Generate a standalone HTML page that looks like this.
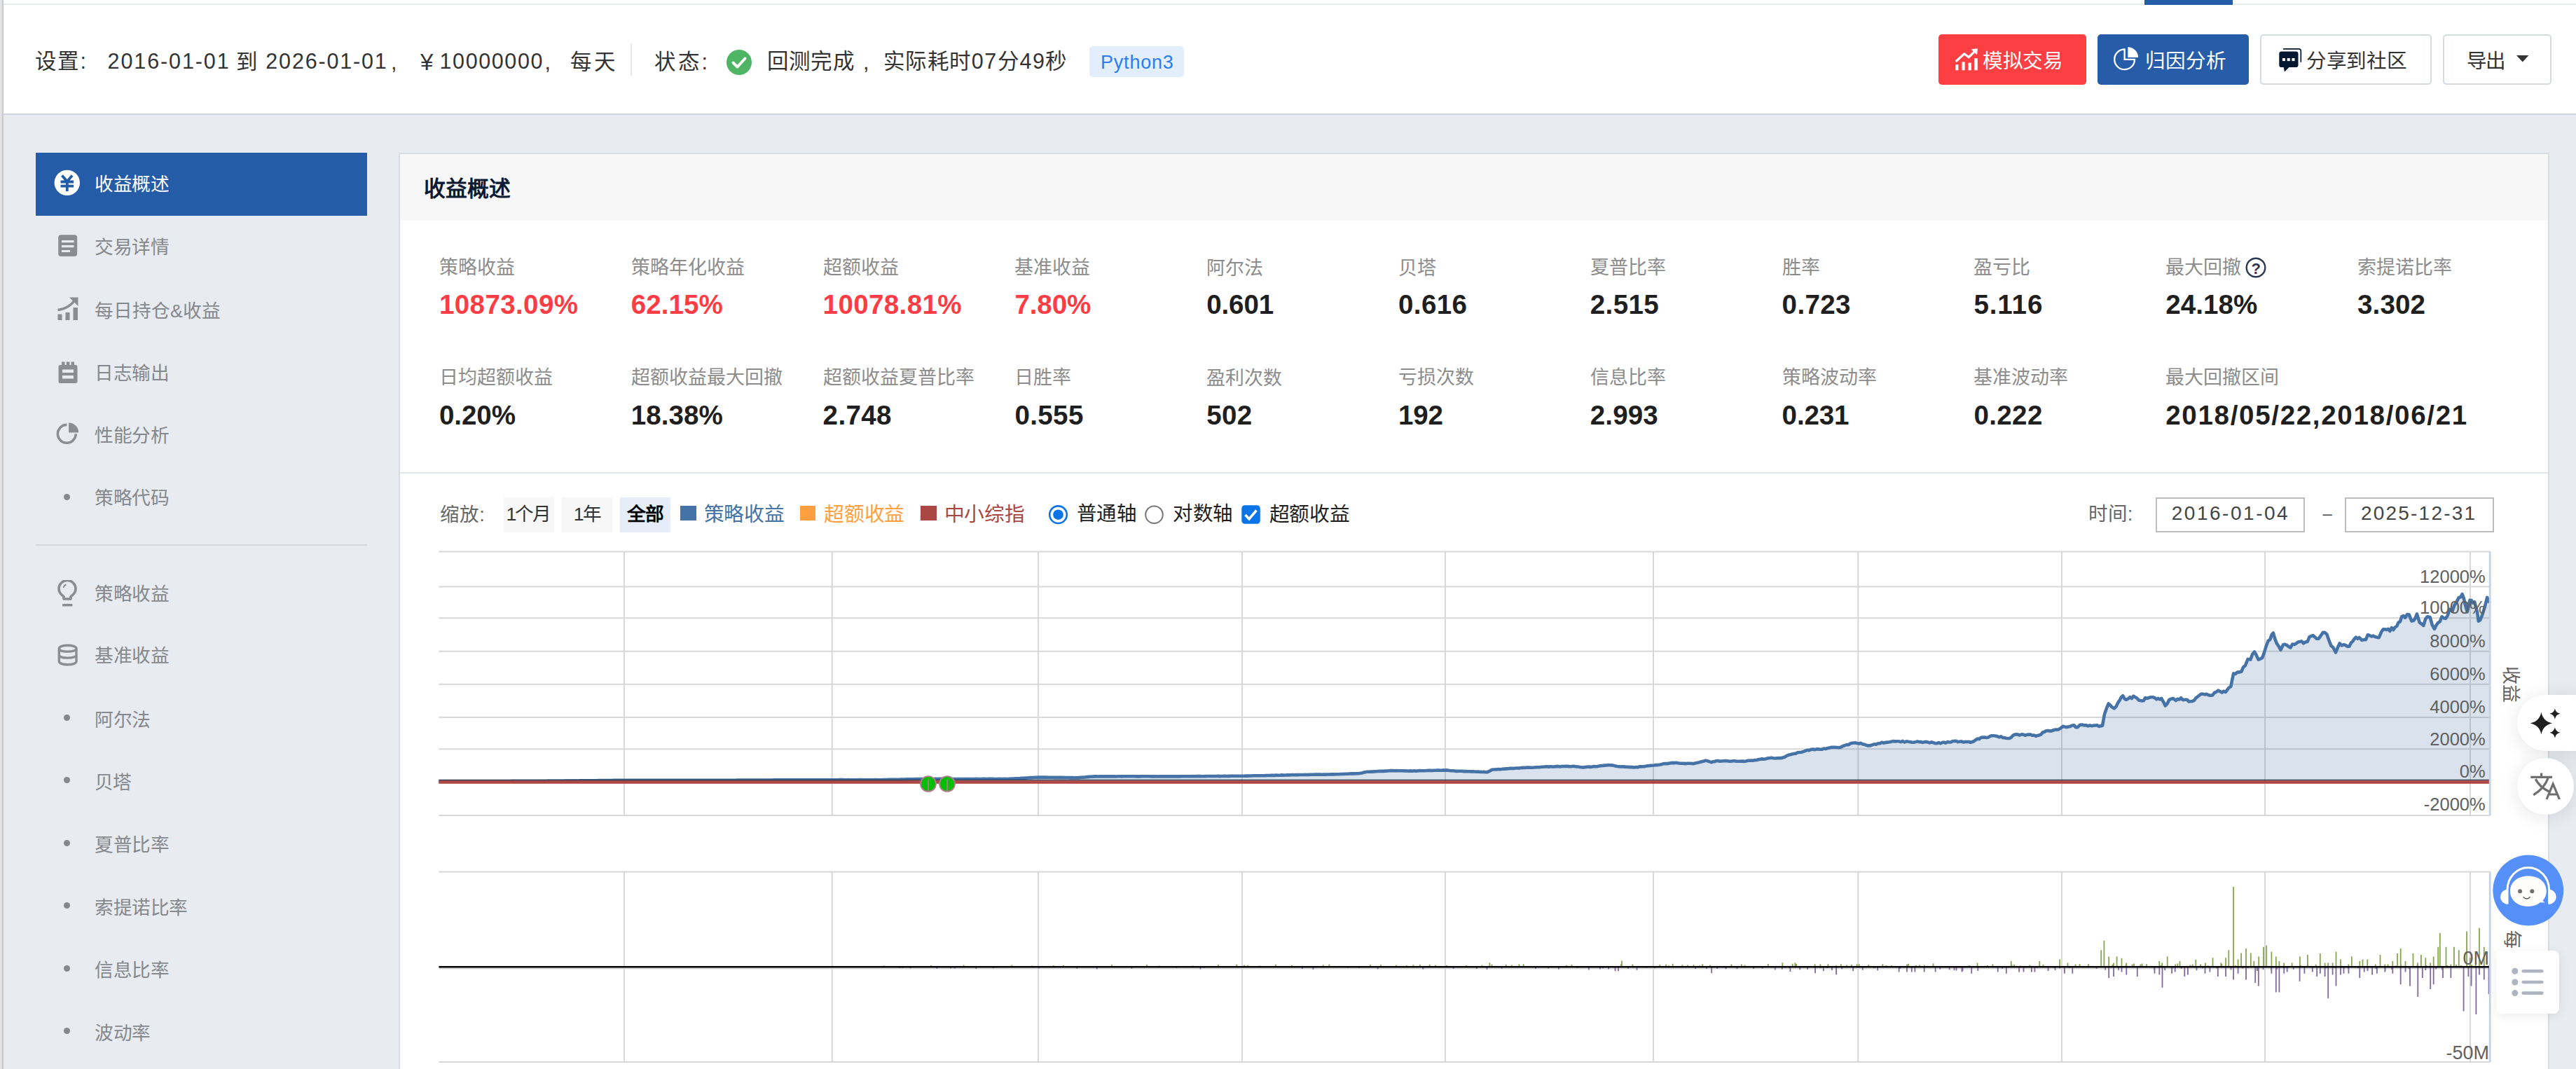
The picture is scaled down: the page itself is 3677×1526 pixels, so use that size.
<!DOCTYPE html>
<html lang="zh-CN"><head><meta charset="utf-8"><title>回测详情</title>
<style>
html,body{margin:0;padding:0}
body{width:3677px;height:1526px;overflow:hidden;background:#e8ebf0;font-family:"Liberation Sans",sans-serif;position:relative;color:#333}
div,span,svg{position:absolute;box-sizing:border-box}
.t{white-space:nowrap;line-height:1}
.b{font-weight:bold}
</style></head><body>
<div style="left:0.0px;top:0.0px;width:3677.0px;height:163.5px;background:#fff;"></div>
<div style="left:0.0px;top:4.9px;width:3677.0px;height:1.9px;background:#e6ebf0;"></div>
<div style="left:3061.0px;top:0.0px;width:126.0px;height:6.8px;background:#245ca8;"></div>
<div style="left:0.0px;top:161.7px;width:3677.0px;height:1.9px;background:#d0d5dd;"></div>
<div style="left:0.0px;top:0.0px;width:3.4px;height:1526.0px;background:#e3e3e3;"></div>
<div style="left:3.4px;top:0.0px;width:1.9px;height:1526.0px;background:#c9c9c9;"></div>
<div id="t1" class="t" style="top:71.8px;font-size:30.5px;color:#333;left:50.0px;letter-spacing:2.26px;">设置:</div>
<div id="t2" class="t" style="top:71.8px;font-size:30.5px;color:#333;left:153.6px;letter-spacing:1.89px;">2016-01-01</div>
<div id="t3" class="t" style="top:72.8px;font-size:30.5px;color:#333;left:337.0px;">到</div>
<div id="t4" class="t" style="top:71.8px;font-size:30.5px;color:#333;left:379.3px;letter-spacing:1.83px;">2026-01-01</div>
<div id="t5" class="t" style="top:72.8px;font-size:30.5px;color:#333;left:558.0px;">,</div>
<div id="t6" class="t" style="top:71.5px;font-size:33.0px;color:#333;left:600.0px;">¥</div>
<div id="t7" class="t" style="top:71.8px;font-size:30.5px;color:#333;left:627.5px;letter-spacing:1.61px;">10000000</div>
<div id="t8" class="t" style="top:72.8px;font-size:30.5px;color:#333;left:777.6px;">,</div>
<div id="t9" class="t" style="top:72.8px;font-size:30.5px;color:#333;left:814.0px;letter-spacing:3.50px;">每天</div>
<div style="left:900.3px;top:63.0px;width:1.9px;height:44.6px;background:#e4e8ee;"></div>
<div id="t10" class="t" style="top:72.8px;font-size:30.5px;color:#333;left:934.0px;letter-spacing:3.76px;">状态:</div>
<svg style="left:1037px;top:70.7px" width="36" height="36" viewBox="0 0 36 36"><circle cx="18" cy="18" r="18" fill="#4db564"/><path d="M9.5 18.5 L15.5 24.5 L26.5 12.5" fill="none" stroke="#fff" stroke-width="4" stroke-linecap="round" stroke-linejoin="round"/></svg>
<div id="t11" class="t" style="top:71.8px;font-size:30.5px;color:#333;left:1094.8px;letter-spacing:1.33px;">回测完成</div>
<div id="t12" class="t" style="top:72.8px;font-size:30.5px;color:#333;left:1232.0px;">,</div>
<div id="t13" class="t" style="top:71.8px;font-size:30.5px;color:#333;left:1260.5px;letter-spacing:1.57px;">实际耗时07分49秒</div>
<div style="left:1555.3px;top:66.0px;width:134.5px;height:44.4px;background:#e3eefd;border-radius:5px;"></div>
<div id="t14" class="t" style="top:76.1px;font-size:27.0px;color:#2d7cf0;left:1571.0px;letter-spacing:0.79px;">Python3</div>
<div style="left:2767.0px;top:49.1px;width:211.0px;height:71.7px;background:#fd3e42;border-radius:5px;"></div>
<div style="left:2994.0px;top:49.1px;width:216.0px;height:71.7px;background:#265ca8;border-radius:5px;"></div>
<div style="left:3226.2px;top:49.1px;width:245.0px;height:71.7px;background:#fff;border:2px solid #d5dbe0;border-radius:5px;"></div>
<div style="left:3487.0px;top:49.1px;width:155.0px;height:71.7px;background:#fff;border:2px solid #d5dbe0;border-radius:5px;"></div>
<div id="t15" class="t" style="top:73.1px;font-size:28.6px;color:#fff;left:2830.0px;letter-spacing:-0.47px;">模拟交易</div>
<div id="t16" class="t" style="top:73.1px;font-size:28.6px;color:#fff;left:3062.0px;">归因分析</div>
<div id="t17" class="t" style="top:72.5px;font-size:28.6px;color:#333;left:3292.0px;letter-spacing:-0.30px;">分享到社区</div>
<div id="t18" class="t" style="top:73.1px;font-size:28.6px;color:#333;left:3521.0px;letter-spacing:-2.00px;">导出</div>
<svg style="left:3592px;top:79px" width="18" height="10" viewBox="0 0 18 10"><path d="M0 0 H17.5 L8.75 9.5 Z" fill="#333"/></svg>
<div style="left:51.0px;top:217.6px;width:473.0px;height:90.0px;background:#255ca8;"></div>
<div id="t19" class="t" style="top:250.3px;font-size:26.7px;color:#fff;left:135.0px;letter-spacing:-0.40px;">收益概述</div>
<div id="t20" class="t" style="top:340.2px;font-size:26.7px;color:#85888c;left:135.0px;letter-spacing:-0.40px;">交易详情</div>
<div id="t21" class="t" style="top:431.2px;font-size:26.7px;color:#85888c;left:135.0px;">每日持仓&amp;收益</div>
<div id="t22" class="t" style="top:519.9px;font-size:26.7px;color:#85888c;left:135.0px;letter-spacing:-0.40px;">日志输出</div>
<div id="t23" class="t" style="top:609.2px;font-size:26.7px;color:#85888c;left:135.0px;letter-spacing:-0.40px;">性能分析</div>
<div id="t24" class="t" style="top:697.6px;font-size:26.7px;color:#85888c;left:135.0px;letter-spacing:-0.40px;">策略代码</div>
<div style="left:51.0px;top:777.2px;width:473.0px;height:1.9px;background:#d3d7dc;"></div>
<div id="t25" class="t" style="top:834.6px;font-size:26.7px;color:#85888c;left:135.0px;letter-spacing:-0.40px;">策略收益</div>
<div id="t26" class="t" style="top:922.6px;font-size:26.7px;color:#85888c;left:135.0px;letter-spacing:-0.40px;">基准收益</div>
<div id="t27" class="t" style="top:1015.0px;font-size:26.7px;color:#85888c;left:135.0px;letter-spacing:-0.45px;">阿尔法</div>
<div id="t28" class="t" style="top:1103.7px;font-size:26.7px;color:#85888c;left:135.0px;letter-spacing:-0.61px;">贝塔</div>
<div id="t29" class="t" style="top:1193.2px;font-size:26.7px;color:#85888c;left:135.0px;letter-spacing:-0.40px;">夏普比率</div>
<div id="t30" class="t" style="top:1282.7px;font-size:26.7px;color:#85888c;left:135.0px;letter-spacing:-0.38px;">索提诺比率</div>
<div id="t31" class="t" style="top:1371.7px;font-size:26.7px;color:#85888c;left:135.0px;letter-spacing:-0.40px;">信息比率</div>
<div id="t32" class="t" style="top:1461.7px;font-size:26.7px;color:#85888c;left:135.0px;letter-spacing:-0.45px;">波动率</div>
<div style="left:91.1px;top:704.5px;width:9.4px;height:9.4px;background:#85888c;border-radius:50%;"></div>
<div style="left:91.1px;top:1019.8px;width:9.4px;height:9.4px;background:#85888c;border-radius:50%;"></div>
<div style="left:91.1px;top:1109.1px;width:9.4px;height:9.4px;background:#85888c;border-radius:50%;"></div>
<div style="left:91.1px;top:1198.8px;width:9.4px;height:9.4px;background:#85888c;border-radius:50%;"></div>
<div style="left:91.1px;top:1288.1px;width:9.4px;height:9.4px;background:#85888c;border-radius:50%;"></div>
<div style="left:91.1px;top:1377.6px;width:9.4px;height:9.4px;background:#85888c;border-radius:50%;"></div>
<div style="left:91.1px;top:1467.1px;width:9.4px;height:9.4px;background:#85888c;border-radius:50%;"></div>
<svg style="left:77px;top:242px" width="38" height="38" viewBox="0 0 38 38"><circle cx="18.800" cy="18.900" r="18.200" fill="#fff"/><path d="M11.5 8.5 L18.800 17 L26.100 8.500 M9.500 17.500 H28.100 M9.500 23.700 H28.100 M18.800 17 V31" fill="none" stroke="#255ca8" stroke-width="3.800"/></svg>
<svg style="left:82.500px;top:335px" width="28" height="32" viewBox="0 0 28 32"><rect x="0.200" y="0.300" width="27" height="30.800" rx="4" fill="#8a8d91"/><g fill="#e8ebf0"><rect x="5" y="8" width="17.500" height="3.200"/><rect x="5" y="15" width="17.500" height="3.200"/><rect x="5" y="22" width="12" height="3"/></g></svg>
<svg style="left:82px;top:423px" width="31" height="36" viewBox="0 0 31 36"><g fill="#8a8d91"><rect x="0.500" y="25.500" width="6" height="8.500"/><rect x="11.500" y="23" width="6" height="11"/><rect x="22.500" y="16" width="6.500" height="18"/></g><path d="M0.500 19.500 C10 18.500 19 14 26 4" fill="none" stroke="#8a8d91" stroke-width="3.400"/><path d="M17 1.500 H29.500 V14 Z" fill="#8a8d91"/></svg>
<svg style="left:82.500px;top:516px" width="28" height="32" viewBox="0 0 28 32"><path d="M3 5 H25 a2.500 2.500 0 0 1 2.500 2.500 V28.500 a2.500 2.500 0 0 1 -2.500 2.500 H3 a2.500 2.500 0 0 1 -2.500 -2.500 V7.500 a2.500 2.500 0 0 1 2.500 -2.500 Z" fill="#8a8d91"/><g fill="#8a8d91"><rect x="5" y="0.500" width="4.500" height="8"/><rect x="11.800" y="0.500" width="4.500" height="8"/><rect x="18.500" y="0.500" width="4.500" height="8"/></g><g fill="#e8ebf0"><rect x="6" y="11.500" width="16" height="4.500"/><rect x="6" y="20" width="16" height="4.500"/></g></svg>
<svg style="left:80px;top:603px" width="34" height="34" viewBox="0 0 34 34"><path d="M15.3 3.4 A12.9 12.9 0 1 0 28.2 16.3" fill="none" stroke="#8a8d91" stroke-width="3.6"/><path d="M18.1 14.5 V0.5 A14 14 0 0 1 32.1 14.5 Z" fill="#8a8d91"/></svg>
<svg style="left:82px;top:827.5px" width="29" height="40" viewBox="0 0 29 40"><path d="M9 27 V23.500 C4.500 20.500 2 17.500 2 12.500 A12 12 0 0 1 26 12.500 C26 17.500 23.500 20.500 19 23.500 V27 Z" fill="none" stroke="#8a8d91" stroke-width="3.6" stroke-linejoin="round"/><path d="M8.500 11 A5.500 5.500 0 0 1 12.500 6.500" fill="none" stroke="#8a8d91" stroke-width="2"/><rect x="7" y="34" width="14.500" height="3.600" rx="1" fill="#8a8d91"/></svg>
<svg style="left:82px;top:918.500px" width="30" height="32" viewBox="0 0 30 32"><path d="M2.300 7 C2.300 0.700 27 0.700 27 7 V25 C27 31.300 2.300 31.300 2.300 25 Z M2.300 7 C2.300 12.500 27 12.500 27 7 M2.300 16 C2.300 21.500 27 21.500 27 16" fill="none" stroke="#8a8d91" stroke-width="3.400"/></svg>
<div style="left:569.0px;top:217.6px;width:3070.0px;height:1320.0px;background:#fff;border:2px solid #d8dde3;"></div>
<div style="left:571.0px;top:219.6px;width:3066.0px;height:95.4px;background:#f7f7f8;"></div>
<div id="t33" class="t b" style="top:255.1px;font-size:30.8px;color:#0d1a33;left:605.0px;">收益概述</div>
<div id="t34" class="t" style="top:369.4px;font-size:27.0px;color:#8c8c8c;left:627.0px;">策略收益</div>
<div id="t35" class="t b" style="top:415.9px;font-size:38.6px;color:#fc3d46;left:627.0px;letter-spacing:0.35px;">10873.09%</div>
<div id="t36" class="t" style="top:369.4px;font-size:27.0px;color:#8c8c8c;left:900.8px;">策略年化收益</div>
<div id="t37" class="t b" style="top:415.9px;font-size:38.6px;color:#fc3d46;left:900.8px;letter-spacing:0.03px;">62.15%</div>
<div id="t38" class="t" style="top:368.9px;font-size:27.0px;color:#8c8c8c;left:1174.6px;">超额收益</div>
<div id="t39" class="t b" style="top:415.9px;font-size:38.6px;color:#fc3d46;left:1174.6px;letter-spacing:0.35px;">10078.81%</div>
<div id="t40" class="t" style="top:369.4px;font-size:27.0px;color:#8c8c8c;left:1448.4px;">基准收益</div>
<div id="t41" class="t b" style="top:415.9px;font-size:38.6px;color:#fc3d46;left:1448.4px;letter-spacing:-0.10px;">7.80%</div>
<div id="t42" class="t" style="top:369.9px;font-size:27.0px;color:#8c8c8c;left:1722.2px;">阿尔法</div>
<div id="t43" class="t b" style="top:415.9px;font-size:38.6px;color:#1f1f1f;left:1722.2px;letter-spacing:-0.14px;">0.601</div>
<div id="t44" class="t" style="top:369.9px;font-size:27.0px;color:#8c8c8c;left:1996.0px;">贝塔</div>
<div id="t45" class="t b" style="top:415.9px;font-size:38.6px;color:#1f1f1f;left:1996.0px;letter-spacing:0.36px;">0.616</div>
<div id="t46" class="t" style="top:369.4px;font-size:27.0px;color:#8c8c8c;left:2269.8px;">夏普比率</div>
<div id="t47" class="t b" style="top:415.9px;font-size:38.6px;color:#1f1f1f;left:2269.8px;letter-spacing:0.36px;">2.515</div>
<div id="t48" class="t" style="top:369.4px;font-size:27.0px;color:#8c8c8c;left:2543.6px;">胜率</div>
<div id="t49" class="t b" style="top:415.9px;font-size:38.6px;color:#1f1f1f;left:2543.6px;letter-spacing:0.36px;">0.723</div>
<div id="t50" class="t" style="top:369.4px;font-size:27.0px;color:#8c8c8c;left:2817.4px;">盈亏比</div>
<div id="t51" class="t b" style="top:415.9px;font-size:38.6px;color:#1f1f1f;left:2817.4px;letter-spacing:0.89px;">5.116</div>
<div id="t52" class="t" style="top:369.4px;font-size:27.0px;color:#8c8c8c;left:3091.2px;">最大回撤</div>
<div id="t53" class="t b" style="top:415.9px;font-size:38.6px;color:#1f1f1f;left:3091.2px;letter-spacing:0.03px;">24.18%</div>
<div id="t54" class="t" style="top:369.4px;font-size:27.0px;color:#8c8c8c;left:3365.0px;">索提诺比率</div>
<div id="t55" class="t b" style="top:415.9px;font-size:38.6px;color:#1f1f1f;left:3365.0px;letter-spacing:0.11px;">3.302</div>
<div id="t56" class="t" style="top:525.9px;font-size:27.0px;color:#8c8c8c;left:627.0px;">日均超额收益</div>
<div id="t57" class="t b" style="top:574.1px;font-size:38.6px;color:#1f1f1f;left:627.0px;letter-spacing:-0.10px;">0.20%</div>
<div id="t58" class="t" style="top:526.4px;font-size:27.0px;color:#8c8c8c;left:900.8px;">超额收益最大回撤</div>
<div id="t59" class="t b" style="top:574.1px;font-size:38.6px;color:#1f1f1f;left:900.8px;letter-spacing:0.03px;">18.38%</div>
<div id="t60" class="t" style="top:526.4px;font-size:27.0px;color:#8c8c8c;left:1174.6px;">超额收益夏普比率</div>
<div id="t61" class="t b" style="top:574.1px;font-size:38.6px;color:#1f1f1f;left:1174.6px;letter-spacing:0.36px;">2.748</div>
<div id="t62" class="t" style="top:526.4px;font-size:27.0px;color:#8c8c8c;left:1448.4px;">日胜率</div>
<div id="t63" class="t b" style="top:574.1px;font-size:38.6px;color:#1f1f1f;left:1448.4px;letter-spacing:0.36px;">0.555</div>
<div id="t64" class="t" style="top:526.9px;font-size:27.0px;color:#8c8c8c;left:1722.2px;">盈利次数</div>
<div id="t65" class="t b" style="top:574.1px;font-size:38.6px;color:#1f1f1f;left:1722.2px;letter-spacing:0.32px;">502</div>
<div id="t66" class="t" style="top:526.4px;font-size:27.0px;color:#8c8c8c;left:1996.0px;">亏损次数</div>
<div id="t67" class="t b" style="top:574.1px;font-size:38.6px;color:#1f1f1f;left:1996.0px;letter-spacing:-0.18px;">192</div>
<div id="t68" class="t" style="top:526.4px;font-size:27.0px;color:#8c8c8c;left:2269.8px;">信息比率</div>
<div id="t69" class="t b" style="top:574.1px;font-size:38.6px;color:#1f1f1f;left:2269.8px;letter-spacing:0.11px;">2.993</div>
<div id="t70" class="t" style="top:526.4px;font-size:27.0px;color:#8c8c8c;left:2543.6px;">策略波动率</div>
<div id="t71" class="t b" style="top:574.1px;font-size:38.6px;color:#1f1f1f;left:2543.6px;letter-spacing:-0.14px;">0.231</div>
<div id="t72" class="t" style="top:526.4px;font-size:27.0px;color:#8c8c8c;left:2817.4px;">基准波动率</div>
<div id="t73" class="t b" style="top:574.1px;font-size:38.6px;color:#1f1f1f;left:2817.4px;letter-spacing:0.36px;">0.222</div>
<div id="t74" class="t" style="top:526.4px;font-size:27.0px;color:#8c8c8c;left:3091.2px;">最大回撤区间</div>
<div id="t75" class="t b" style="top:574.1px;font-size:38.6px;color:#1f1f1f;left:3091.2px;letter-spacing:1.66px;">2018/05/22,2018/06/21</div>
<svg style="left:3204px;top:366px" width="32" height="32" viewBox="0 0 32 32"><circle cx="16" cy="16" r="13.300" fill="#fff" stroke="#2b3650" stroke-width="2.400"/></svg>
<div id="t76" class="t b" style="top:372.5px;font-size:22.0px;color:#2b3650;left:3213.5px;">?</div>
<div style="left:571.0px;top:673.8px;width:3066.0px;height:1.9px;background:#e3e8ef;"></div>
<div id="t77" class="t" style="top:720.8px;font-size:27.5px;color:#666;left:628.0px;letter-spacing:1.18px;">缩放:</div>
<div style="left:718.8px;top:710.4px;width:71.9px;height:49.4px;background:#f7f7f7;"></div>
<div style="left:802.2px;top:710.4px;width:71.7px;height:49.4px;background:#f7f7f7;"></div>
<div style="left:885.3px;top:710.4px;width:72.0px;height:49.4px;background:#e6edf8;"></div>
<div id="t78" class="t" style="top:721.1px;font-size:26.7px;color:#333;left:722.5px;letter-spacing:-2.18px;">1个月</div>
<div id="t79" class="t" style="top:720.6px;font-size:26.7px;color:#333;left:818.7px;letter-spacing:-1.34px;">1年</div>
<div id="t80" class="t b" style="top:720.6px;font-size:26.7px;color:#000;left:894.5px;letter-spacing:-0.61px;">全部</div>
<div style="left:971.0px;top:721.5px;width:22.6px;height:21.5px;background:#4572a7;"></div>
<div id="t81" class="t" style="top:719.6px;font-size:28.8px;color:#4572a7;left:1004.6px;letter-spacing:-0.27px;">策略收益</div>
<div style="left:1141.5px;top:721.5px;width:22.6px;height:21.5px;background:#ff9f3f;"></div>
<div id="t82" class="t" style="top:719.6px;font-size:28.8px;color:#ff9f3f;left:1175.8px;letter-spacing:-0.10px;">超额收益</div>
<div style="left:1314.0px;top:721.5px;width:22.6px;height:21.5px;background:#aa4643;"></div>
<div id="t83" class="t" style="top:719.6px;font-size:28.8px;color:#aa4643;left:1347.5px;letter-spacing:-0.10px;">中小综指</div>
<svg style="left:1496px;top:720px" width="30" height="30" viewBox="0 0 30 30"><circle cx="14.500" cy="14.700" r="12.300" fill="#fff" stroke="#0b74e8" stroke-width="2.600"/><circle cx="14.500" cy="14.700" r="7.300" fill="#0b74e8"/></svg>
<div id="t84" class="t" style="top:718.5px;font-size:28.5px;color:#1f1f1f;left:1537.0px;letter-spacing:-0.75px;">普通轴</div>
<svg style="left:1633px;top:720px" width="30" height="30" viewBox="0 0 30 30"><circle cx="14.500" cy="14.700" r="12.300" fill="#fff" stroke="#767676" stroke-width="2"/></svg>
<div id="t85" class="t" style="top:718.5px;font-size:28.5px;color:#1f1f1f;left:1674.0px;letter-spacing:-0.50px;">对数轴</div>
<svg style="left:1772px;top:721px" width="28" height="28" viewBox="0 0 28 28"><rect x="0.300" y="0.300" width="26.500" height="26.500" rx="4.500" fill="#0b74e8"/><path d="M5.500 14 L11 19.800 L21.500 7.500" fill="none" stroke="#fff" stroke-width="3.600"/></svg>
<div id="t86" class="t" style="top:720.2px;font-size:28.8px;color:#1f1f1f;left:1811.6px;letter-spacing:-0.27px;">超额收益</div>
<div id="t87" class="t" style="top:719.8px;font-size:27.5px;color:#666;left:2980.8px;letter-spacing:0.93px;">时间:</div>
<div style="left:3077.4px;top:710.4px;width:213.0px;height:49.2px;background:#fff;border:2px solid #bcbcbc;"></div>
<div style="left:3347.3px;top:710.4px;width:213.0px;height:49.2px;background:#fff;border:2px solid #bcbcbc;"></div>
<div id="t88" class="t" style="top:719.0px;font-size:28.0px;color:#444;left:3099.7px;letter-spacing:2.53px;">2016-01-04</div>
<div id="t89" class="t" style="top:721.0px;font-size:24.0px;color:#444;left:3315.5px;">–</div>
<div id="t90" class="t" style="top:719.0px;font-size:28.0px;color:#444;left:3370.0px;letter-spacing:2.20px;">2025-12-31</div>
<svg style="left:0;top:0" width="3677" height="1526" viewBox="0 0 3677 1526"><path d="M626.4 787.5 H3554.5M626.4 837.6 H3554.5M626.4 882.2 H3554.5M626.4 929.7 H3554.5M626.4 976.8 H3554.5M626.4 1024.0 H3554.5M626.4 1069.2 H3554.5M626.4 1163.9 H3554.5M891.0 787.5 V1163.9M1187.7 787.5 V1163.9M1482.0 787.5 V1163.9M1773.0 787.5 V1163.9M2063.0 787.5 V1163.9M2360.0 787.5 V1163.9M2652.3 787.5 V1163.9M2943.0 787.5 V1163.9M3233.0 787.5 V1163.9M3526.0 787.5 V1163.9" stroke="#d8d8d8" stroke-width="2" fill="none"/><path d="M626.3 1115.5 L628.9 1115.5 L631.5 1115.5 L634.1 1115.5 L636.7 1115.5 L639.3 1115.5 L641.9 1115.5 L644.5 1115.5 L647.1 1115.5 L649.7 1115.5 L652.2 1115.5 L654.8 1115.5 L657.4 1115.4 L660.0 1115.4 L662.6 1115.4 L665.2 1115.4 L667.8 1115.4 L670.4 1115.4 L673.0 1115.3 L675.6 1115.4 L678.2 1115.4 L680.8 1115.3 L683.4 1115.3 L686.0 1115.3 L688.6 1115.3 L691.2 1115.3 L693.7 1115.3 L696.3 1115.3 L698.9 1115.3 L701.5 1115.3 L704.1 1115.2 L706.7 1115.2 L709.3 1115.2 L711.9 1115.2 L714.5 1115.2 L717.1 1115.2 L719.7 1115.2 L722.3 1115.2 L724.9 1115.2 L727.5 1115.2 L730.1 1115.1 L732.7 1115.1 L735.3 1115.1 L737.8 1115.1 L740.4 1115.1 L743.0 1115.1 L745.6 1115.1 L748.2 1115.1 L750.8 1115.0 L753.4 1115.0 L756.0 1115.0 L758.6 1115.0 L761.2 1115.0 L763.8 1115.0 L766.4 1115.0 L769.0 1115.0 L771.6 1115.0 L774.2 1115.0 L776.8 1115.0 L779.4 1115.0 L782.0 1114.9 L784.6 1114.9 L787.2 1114.9 L789.8 1114.8 L792.4 1114.8 L795.0 1114.8 L797.5 1114.8 L800.1 1114.7 L802.7 1114.7 L805.3 1114.7 L807.9 1114.6 L810.5 1114.6 L813.1 1114.6 L815.7 1114.6 L818.3 1114.5 L820.9 1114.5 L823.5 1114.5 L826.1 1114.5 L828.7 1114.4 L831.3 1114.4 L833.9 1114.4 L836.5 1114.3 L839.1 1114.3 L841.7 1114.3 L844.3 1114.3 L846.9 1114.2 L849.5 1114.2 L852.1 1114.2 L854.7 1114.1 L857.3 1114.1 L859.9 1114.1 L862.5 1114.1 L865.1 1114.0 L867.7 1114.0 L870.3 1114.0 L872.9 1114.0 L875.5 1113.9 L878.1 1113.9 L880.7 1113.9 L883.3 1113.8 L885.9 1113.8 L888.5 1113.8 L891.1 1113.8 L893.7 1113.8 L896.3 1113.8 L898.9 1113.8 L901.5 1113.8 L904.1 1113.8 L906.7 1113.8 L909.3 1113.8 L911.9 1113.8 L914.5 1113.8 L917.1 1113.8 L919.7 1113.8 L922.3 1113.8 L924.9 1113.8 L927.5 1113.8 L930.1 1113.8 L932.7 1113.8 L935.3 1113.8 L937.9 1113.8 L940.5 1113.8 L943.1 1113.8 L945.7 1113.8 L948.3 1113.8 L950.9 1113.8 L953.5 1113.8 L956.1 1113.8 L958.7 1113.8 L961.3 1113.8 L963.9 1113.8 L966.5 1113.8 L969.1 1113.8 L971.7 1113.8 L974.3 1113.8 L976.9 1113.8 L979.5 1113.8 L982.1 1113.8 L984.7 1113.8 L987.3 1113.8 L989.9 1113.8 L992.5 1113.8 L995.1 1113.8 L997.7 1113.8 L1000.3 1113.8 L1002.9 1113.8 L1005.5 1113.8 L1008.1 1113.8 L1010.7 1113.8 L1013.3 1113.8 L1015.9 1113.8 L1018.5 1113.8 L1021.1 1113.7 L1023.7 1113.7 L1026.3 1113.7 L1028.9 1113.7 L1031.5 1113.7 L1034.1 1113.7 L1036.7 1113.7 L1039.3 1113.7 L1041.9 1113.7 L1044.5 1113.7 L1047.1 1113.7 L1049.7 1113.7 L1052.3 1113.6 L1054.9 1113.6 L1057.5 1113.6 L1060.1 1113.6 L1062.7 1113.6 L1065.3 1113.6 L1067.9 1113.6 L1070.5 1113.6 L1073.1 1113.6 L1075.7 1113.5 L1078.4 1113.5 L1081.0 1113.5 L1083.6 1113.5 L1086.2 1113.5 L1088.8 1113.5 L1091.4 1113.5 L1094.0 1113.5 L1096.6 1113.5 L1099.2 1113.5 L1101.8 1113.5 L1104.4 1113.4 L1107.0 1113.4 L1109.6 1113.4 L1112.2 1113.4 L1114.8 1113.4 L1117.4 1113.4 L1120.0 1113.4 L1122.6 1113.4 L1125.2 1113.4 L1127.8 1113.4 L1130.4 1113.4 L1133.0 1113.3 L1135.6 1113.3 L1138.2 1113.3 L1140.8 1113.3 L1143.4 1113.3 L1146.0 1113.3 L1148.6 1113.3 L1151.2 1113.3 L1153.8 1113.3 L1156.4 1113.3 L1159.0 1113.3 L1161.6 1113.3 L1164.2 1113.2 L1166.8 1113.2 L1169.5 1113.2 L1172.1 1113.2 L1174.7 1113.2 L1177.3 1113.2 L1179.9 1113.2 L1182.5 1113.2 L1185.1 1113.2 L1187.7 1113.2 L1190.3 1113.2 L1192.9 1113.2 L1195.4 1113.2 L1198.0 1113.1 L1200.6 1113.1 L1203.2 1113.1 L1205.8 1113.2 L1208.4 1113.2 L1211.0 1113.1 L1213.6 1113.2 L1216.2 1113.2 L1218.8 1113.2 L1221.4 1113.2 L1223.9 1113.2 L1226.5 1113.1 L1229.1 1113.1 L1231.7 1113.2 L1234.3 1113.2 L1236.9 1113.2 L1239.5 1113.2 L1242.1 1113.2 L1244.7 1113.2 L1247.3 1113.2 L1249.8 1113.1 L1252.4 1113.2 L1255.0 1113.2 L1257.6 1113.2 L1260.2 1113.1 L1262.8 1113.1 L1265.4 1113.0 L1268.0 1112.9 L1270.6 1112.9 L1273.2 1112.9 L1275.8 1112.8 L1278.4 1112.7 L1281.0 1112.7 L1283.6 1112.7 L1286.2 1112.6 L1288.8 1112.6 L1291.4 1112.5 L1294.0 1112.4 L1296.6 1112.4 L1299.2 1112.3 L1301.8 1112.3 L1304.4 1112.2 L1307.0 1112.1 L1309.6 1112.1 L1312.2 1112.0 L1314.8 1112.0 L1317.4 1112.0 L1320.0 1112.0 L1322.6 1112.0 L1325.2 1112.0 L1327.8 1112.0 L1330.4 1112.0 L1333.0 1112.0 L1335.6 1111.9 L1338.2 1112.0 L1340.8 1111.9 L1343.4 1111.9 L1346.0 1112.0 L1348.6 1112.0 L1351.2 1112.0 L1353.8 1112.0 L1356.4 1112.0 L1359.0 1112.0 L1361.6 1112.0 L1364.2 1112.0 L1366.8 1112.0 L1369.4 1112.0 L1372.0 1112.0 L1374.6 1112.0 L1377.2 1112.0 L1379.8 1112.0 L1382.4 1112.0 L1385.0 1112.0 L1387.6 1112.0 L1390.2 1112.0 L1392.8 1111.9 L1395.4 1112.0 L1398.0 1112.0 L1400.6 1112.0 L1403.2 1111.9 L1405.8 1111.9 L1408.4 1112.0 L1411.0 1111.9 L1413.6 1111.9 L1416.2 1111.9 L1418.8 1112.0 L1421.4 1112.0 L1424.0 1112.0 L1426.6 1111.9 L1429.2 1112.0 L1431.8 1112.0 L1434.4 1111.9 L1437.0 1112.0 L1439.6 1111.9 L1442.3 1111.7 L1444.9 1111.5 L1447.6 1111.5 L1450.3 1111.3 L1452.9 1111.2 L1455.6 1111.1 L1458.2 1110.9 L1460.9 1110.8 L1463.6 1110.6 L1466.3 1110.5 L1469.0 1110.3 L1471.6 1110.1 L1474.3 1110.0 L1477.0 1109.8 L1479.7 1109.8 L1482.4 1109.6 L1485.0 1109.5 L1487.5 1109.6 L1490.1 1109.6 L1492.6 1109.6 L1495.2 1109.7 L1497.7 1109.8 L1500.3 1109.8 L1502.8 1109.7 L1505.4 1109.9 L1507.9 1109.9 L1510.5 1109.9 L1513.1 1109.8 L1515.6 1109.9 L1518.2 1109.9 L1520.7 1110.0 L1523.3 1110.0 L1525.8 1110.0 L1528.4 1110.1 L1530.9 1110.1 L1533.5 1110.2 L1536.0 1110.1 L1538.6 1110.2 L1541.3 1109.9 L1543.9 1109.8 L1546.6 1109.6 L1549.2 1109.4 L1551.9 1109.1 L1554.5 1108.9 L1557.2 1108.8 L1559.9 1108.6 L1562.5 1108.4 L1565.1 1108.3 L1567.7 1108.5 L1570.3 1108.4 L1572.8 1108.4 L1575.4 1108.3 L1578.0 1108.4 L1580.6 1108.3 L1583.2 1108.4 L1585.7 1108.4 L1588.3 1108.3 L1590.9 1108.4 L1593.5 1108.5 L1596.1 1108.3 L1598.7 1108.3 L1601.2 1108.4 L1603.8 1108.3 L1606.4 1108.3 L1609.0 1108.3 L1611.6 1108.3 L1614.1 1108.3 L1616.7 1108.3 L1619.3 1108.3 L1621.9 1108.4 L1624.5 1108.3 L1627.1 1108.4 L1629.6 1108.3 L1632.2 1108.3 L1634.8 1108.3 L1637.4 1108.3 L1640.0 1108.3 L1642.5 1108.4 L1645.1 1108.4 L1647.7 1108.3 L1650.3 1108.4 L1652.9 1108.5 L1655.5 1108.3 L1658.0 1108.4 L1660.6 1108.4 L1663.2 1108.4 L1665.8 1108.4 L1668.4 1108.4 L1670.9 1108.4 L1673.5 1108.4 L1676.1 1108.4 L1678.7 1108.4 L1681.3 1108.3 L1684.0 1108.4 L1686.6 1108.3 L1689.2 1108.3 L1691.8 1108.3 L1694.4 1108.2 L1697.0 1108.2 L1699.7 1108.2 L1702.3 1108.1 L1704.9 1108.2 L1707.5 1108.1 L1710.1 1108.1 L1712.8 1108.1 L1715.4 1108.2 L1718.0 1108.2 L1720.6 1108.1 L1723.2 1108.0 L1725.8 1108.0 L1728.5 1108.0 L1731.1 1108.0 L1733.7 1108.0 L1736.3 1108.0 L1738.9 1107.9 L1741.5 1108.1 L1744.2 1108.0 L1746.8 1107.9 L1749.4 1107.9 L1752.0 1108.0 L1754.6 1107.9 L1757.2 1107.8 L1759.9 1107.8 L1762.5 1107.8 L1765.1 1107.8 L1767.7 1107.8 L1770.3 1107.7 L1773.0 1107.8 L1775.5 1107.7 L1778.1 1107.6 L1780.7 1107.6 L1783.3 1107.5 L1785.8 1107.5 L1788.4 1107.3 L1791.0 1107.3 L1793.6 1107.3 L1796.2 1107.2 L1798.7 1107.2 L1801.3 1107.2 L1803.9 1107.2 L1806.5 1107.1 L1809.0 1107.0 L1811.6 1107.0 L1814.2 1106.9 L1816.8 1106.8 L1819.4 1106.9 L1821.9 1106.6 L1824.5 1106.7 L1827.1 1106.6 L1829.7 1106.4 L1832.3 1106.6 L1834.8 1106.5 L1837.4 1106.4 L1840.0 1106.4 L1842.6 1106.3 L1845.1 1106.1 L1847.7 1106.2 L1850.3 1106.1 L1852.9 1106.1 L1855.5 1106.0 L1858.1 1106.0 L1860.8 1106.0 L1863.4 1105.9 L1866.1 1106.0 L1868.7 1105.9 L1871.4 1105.8 L1874.1 1105.7 L1876.7 1105.6 L1879.4 1105.6 L1882.0 1105.6 L1884.7 1105.5 L1887.3 1105.7 L1890.0 1105.6 L1892.7 1105.6 L1895.3 1105.5 L1898.0 1105.5 L1900.6 1105.4 L1903.3 1105.4 L1905.8 1105.2 L1908.4 1105.3 L1911.0 1105.2 L1913.5 1105.0 L1916.1 1105.0 L1918.7 1104.9 L1921.2 1104.7 L1923.8 1104.8 L1926.3 1104.5 L1928.9 1104.4 L1931.5 1104.4 L1934.0 1104.4 L1936.6 1104.2 L1939.2 1104.2 L1941.5 1103.8 L1943.9 1103.4 L1946.3 1102.8 L1948.7 1102.2 L1951.1 1101.8 L1953.7 1101.7 L1956.3 1101.6 L1959.0 1101.6 L1961.6 1101.4 L1964.2 1101.3 L1966.8 1101.0 L1969.4 1100.9 L1972.0 1100.8 L1974.6 1100.9 L1977.3 1100.6 L1979.9 1100.6 L1982.5 1100.2 L1985.1 1100.1 L1987.7 1100.1 L1990.3 1100.2 L1993.0 1100.0 L1995.5 1100.2 L1998.1 1100.3 L2000.6 1100.2 L2003.2 1100.4 L2005.8 1100.4 L2008.3 1100.5 L2010.9 1100.6 L2013.5 1100.4 L2016.0 1100.7 L2018.6 1100.3 L2021.1 1100.6 L2023.7 1100.5 L2026.3 1100.0 L2028.8 1100.2 L2031.4 1100.3 L2034.0 1100.3 L2036.5 1100.0 L2039.1 1099.9 L2041.6 1099.8 L2044.2 1100.1 L2046.8 1099.7 L2049.3 1099.8 L2051.9 1099.5 L2054.4 1099.6 L2057.0 1099.8 L2059.6 1099.4 L2062.1 1099.6 L2064.7 1099.4 L2067.1 1099.7 L2069.5 1100.1 L2071.9 1100.2 L2074.3 1100.2 L2076.7 1100.6 L2079.2 1100.9 L2081.8 1100.8 L2084.4 1100.7 L2087.0 1100.8 L2089.6 1101.1 L2092.2 1101.1 L2094.8 1101.2 L2097.4 1101.2 L2100.0 1101.4 L2102.6 1101.4 L2105.1 1101.5 L2107.7 1101.8 L2110.3 1101.5 L2112.8 1101.9 L2115.4 1102.0 L2118.0 1101.8 L2120.5 1102.2 L2123.1 1102.1 L2125.3 1101.1 L2127.5 1100.1 L2129.7 1098.8 L2132.2 1098.5 L2134.6 1098.4 L2137.1 1098.2 L2139.6 1098.1 L2142.2 1098.2 L2144.9 1097.8 L2147.5 1097.6 L2150.2 1097.4 L2152.8 1097.2 L2155.4 1096.9 L2158.1 1096.8 L2160.7 1097.0 L2163.4 1096.5 L2166.0 1096.5 L2168.6 1096.6 L2171.3 1096.1 L2173.9 1095.9 L2176.6 1096.0 L2179.2 1095.6 L2181.8 1095.6 L2184.5 1095.8 L2187.1 1095.7 L2189.8 1095.5 L2192.4 1095.2 L2195.0 1095.3 L2197.7 1095.2 L2200.3 1094.8 L2202.9 1094.8 L2205.6 1094.5 L2208.2 1094.2 L2210.9 1094.6 L2213.5 1094.3 L2216.1 1094.5 L2218.8 1094.4 L2221.4 1094.1 L2224.1 1093.9 L2226.7 1094.4 L2229.3 1093.9 L2232.0 1094.0 L2234.6 1093.9 L2237.3 1093.8 L2239.9 1094.1 L2242.5 1094.2 L2245.2 1093.8 L2247.7 1094.0 L2250.1 1094.5 L2252.6 1094.5 L2255.1 1095.0 L2257.6 1095.2 L2260.0 1095.5 L2262.6 1095.1 L2265.1 1094.8 L2267.6 1094.6 L2270.2 1094.9 L2272.7 1094.4 L2275.2 1094.0 L2277.7 1094.2 L2280.3 1094.1 L2282.8 1093.5 L2285.3 1093.1 L2287.9 1092.9 L2290.4 1092.6 L2292.9 1092.5 L2295.5 1092.1 L2298.0 1092.2 L2300.6 1092.4 L2303.3 1092.8 L2305.9 1093.4 L2308.5 1094.0 L2311.2 1094.2 L2313.9 1094.5 L2316.5 1094.4 L2319.2 1094.6 L2321.9 1094.8 L2324.6 1094.9 L2327.3 1095.1 L2329.9 1095.1 L2332.6 1095.5 L2335.2 1095.1 L2337.7 1095.2 L2340.3 1094.4 L2342.8 1094.4 L2345.4 1094.2 L2347.9 1094.1 L2350.5 1093.4 L2353.0 1093.2 L2355.6 1092.9 L2358.1 1092.7 L2360.7 1092.5 L2363.3 1092.1 L2366.0 1092.1 L2368.6 1091.7 L2371.2 1091.3 L2373.9 1090.3 L2376.5 1090.0 L2379.2 1090.1 L2381.8 1089.9 L2384.4 1089.2 L2387.1 1088.9 L2389.8 1089.1 L2392.5 1088.7 L2395.2 1089.2 L2397.9 1089.7 L2400.6 1089.7 L2403.3 1089.9 L2406.0 1090.1 L2408.7 1089.7 L2411.4 1089.7 L2414.1 1089.8 L2416.8 1090.2 L2419.4 1089.6 L2422.0 1089.0 L2424.5 1088.6 L2427.1 1087.8 L2429.7 1087.0 L2432.3 1086.5 L2434.9 1085.6 L2437.7 1086.4 L2440.4 1087.4 L2443.2 1088.2 L2445.4 1087.2 L2447.6 1087.2 L2449.8 1086.2 L2452.4 1086.1 L2455.0 1086.7 L2457.7 1086.5 L2460.3 1086.3 L2463.0 1086.1 L2465.6 1086.3 L2468.2 1086.7 L2470.9 1086.8 L2473.5 1086.3 L2476.2 1086.3 L2478.8 1086.8 L2481.4 1086.8 L2484.1 1086.7 L2486.7 1086.6 L2489.4 1086.9 L2492.0 1086.7 L2494.5 1085.8 L2497.1 1085.7 L2499.7 1085.6 L2502.3 1085.7 L2504.9 1085.1 L2507.5 1085.0 L2510.1 1084.2 L2512.7 1083.7 L2515.3 1083.4 L2517.9 1083.7 L2520.5 1083.2 L2523.1 1082.4 L2525.7 1082.3 L2528.4 1081.8 L2531.2 1082.3 L2533.9 1082.5 L2536.7 1082.2 L2539.4 1082.0 L2542.2 1082.3 L2544.8 1081.5 L2547.4 1080.8 L2550.1 1079.0 L2552.7 1077.8 L2555.4 1077.3 L2558.0 1076.5 L2560.6 1075.9 L2563.3 1075.6 L2565.9 1074.3 L2568.6 1074.0 L2571.3 1073.7 L2574.1 1072.9 L2576.8 1071.9 L2579.6 1070.8 L2582.3 1071.1 L2585.1 1069.8 L2587.7 1069.5 L2590.3 1070.2 L2593.0 1069.4 L2595.6 1069.4 L2598.3 1069.8 L2600.9 1069.7 L2603.5 1068.5 L2606.2 1069.0 L2608.8 1067.9 L2611.4 1067.4 L2614.2 1066.8 L2616.9 1066.7 L2619.7 1066.8 L2622.4 1067.0 L2625.2 1067.3 L2627.9 1066.5 L2630.6 1064.9 L2633.2 1064.3 L2635.9 1063.0 L2638.5 1063.3 L2641.1 1061.5 L2643.6 1060.8 L2646.1 1060.5 L2648.6 1060.4 L2651.0 1060.9 L2653.5 1061.6 L2656.0 1060.8 L2658.6 1062.2 L2661.3 1062.7 L2663.9 1063.8 L2666.6 1064.4 L2669.2 1064.5 L2672.1 1063.4 L2675.0 1062.3 L2677.9 1062.7 L2680.7 1061.2 L2683.4 1061.3 L2686.1 1059.8 L2688.8 1060.6 L2691.5 1059.9 L2694.2 1059.6 L2696.9 1059.3 L2699.6 1058.7 L2702.3 1058.1 L2705.0 1058.4 L2707.7 1058.2 L2710.4 1058.2 L2713.2 1059.2 L2715.9 1057.9 L2718.7 1059.5 L2721.4 1058.3 L2724.2 1058.8 L2726.9 1059.2 L2729.4 1059.8 L2731.9 1059.8 L2734.4 1059.1 L2736.8 1058.4 L2739.3 1059.1 L2741.8 1059.0 L2744.3 1059.9 L2746.7 1059.2 L2749.3 1058.9 L2751.9 1059.4 L2754.4 1060.5 L2757.0 1059.3 L2759.6 1060.1 L2762.1 1061.0 L2764.7 1061.2 L2767.3 1060.2 L2769.8 1061.2 L2772.3 1060.0 L2774.8 1059.6 L2777.3 1060.7 L2779.7 1059.1 L2782.2 1059.5 L2784.7 1059.4 L2787.2 1058.0 L2789.6 1057.9 L2792.2 1057.7 L2794.8 1059.1 L2797.3 1058.7 L2799.9 1058.3 L2802.5 1059.4 L2805.0 1058.9 L2807.6 1059.0 L2810.2 1058.8 L2812.7 1059.9 L2815.2 1059.0 L2817.7 1058.0 L2820.2 1056.1 L2822.6 1054.6 L2825.2 1054.9 L2827.8 1052.7 L2830.3 1052.6 L2832.9 1052.6 L2835.5 1053.1 L2838.0 1052.6 L2840.6 1051.0 L2843.2 1050.3 L2845.7 1050.3 L2848.3 1050.5 L2850.9 1051.1 L2853.4 1052.3 L2856.0 1051.3 L2858.6 1052.9 L2861.1 1053.2 L2863.7 1053.7 L2866.3 1054.0 L2868.8 1053.9 L2871.0 1052.4 L2873.2 1050.0 L2875.4 1048.6 L2878.0 1048.4 L2880.5 1048.5 L2883.0 1049.5 L2885.6 1048.2 L2888.1 1048.5 L2890.7 1049.8 L2893.2 1048.8 L2895.7 1048.5 L2898.3 1048.6 L2900.8 1049.8 L2903.3 1049.4 L2905.9 1050.8 L2908.4 1050.0 L2910.9 1049.4 L2913.4 1048.4 L2915.8 1045.5 L2918.3 1044.7 L2920.8 1043.3 L2923.3 1042.9 L2925.7 1043.4 L2928.2 1043.5 L2930.7 1042.5 L2933.2 1041.6 L2935.6 1041.6 L2938.1 1041.4 L2940.3 1040.1 L2942.5 1038.7 L2944.7 1036.8 L2947.3 1037.6 L2949.8 1038.0 L2952.4 1037.4 L2955.2 1036.9 L2958.0 1035.5 L2960.5 1035.4 L2963.0 1038.1 L2965.5 1038.1 L2969.2 1034.8 L2972.0 1034.5 L2974.8 1035.4 L2977.6 1035.2 L2980.4 1036.4 L2983.2 1035.3 L2986.0 1036.3 L2988.5 1035.6 L2991.0 1035.5 L2993.5 1035.2 L2996.0 1037.0 L2998.5 1036.1 L3001.0 1035.9 L3004.0 1019.4 L3006.8 1011.4 L3009.6 1004.5 L3011.9 1006.3 L3014.1 1008.9 L3017.8 1011.2 L3020.6 1008.6 L3023.5 1002.6 L3025.7 999.5 L3027.9 995.3 L3030.2 993.2 L3032.4 997.2 L3034.7 998.8 L3037.5 997.6 L3040.3 995.1 L3042.8 997.0 L3045.3 993.6 L3047.8 995.1 L3050.3 996.6 L3052.8 999.5 L3055.3 1000.0 L3057.6 1000.5 L3059.9 1000.0 L3062.3 996.0 L3064.6 997.0 L3067.4 996.0 L3070.2 995.2 L3073.0 995.2 L3075.8 996.2 L3078.2 998.2 L3080.5 996.9 L3082.8 998.4 L3085.2 997.0 L3088.0 1001.8 L3090.8 1007.5 L3093.6 1004.4 L3096.4 998.8 L3099.2 997.7 L3102.0 997.0 L3105.8 1000.0 L3108.2 997.8 L3110.7 998.5 L3113.2 996.2 L3116.0 999.2 L3118.8 998.8 L3121.7 998.7 L3124.5 1001.5 L3127.0 1001.3 L3129.4 1000.9 L3131.9 1000.0 L3134.4 996.4 L3136.9 994.5 L3139.4 992.5 L3141.9 990.7 L3144.4 990.6 L3146.9 991.4 L3149.7 990.7 L3152.5 992.3 L3155.3 992.8 L3158.1 992.5 L3160.9 988.9 L3163.7 987.6 L3166.4 985.7 L3169.0 987.1 L3171.6 988.6 L3174.2 986.7 L3176.8 988.0 L3179.3 984.6 L3181.8 981.5 L3184.3 980.1 L3188.1 961.4 L3190.9 962.0 L3193.7 959.6 L3196.5 959.4 L3199.3 958.8 L3202.1 952.3 L3204.9 950.2 L3208.6 940.9 L3212.4 941.6 L3215.2 933.7 L3218.0 930.4 L3220.8 935.4 L3223.6 941.6 L3226.4 940.6 L3229.2 939.0 L3232.0 931.4 L3234.8 922.2 L3237.6 914.9 L3240.4 912.8 L3242.7 906.0 L3244.9 903.5 L3247.3 912.2 L3249.8 918.4 L3252.6 922.5 L3255.4 927.8 L3259.1 920.3 L3261.6 919.8 L3264.1 920.9 L3266.6 922.9 L3269.4 924.6 L3272.2 919.5 L3275.0 920.0 L3277.8 918.4 L3280.3 916.5 L3282.8 915.9 L3285.3 915.4 L3288.1 918.3 L3290.9 916.5 L3293.7 916.0 L3296.5 909.1 L3299.0 908.2 L3301.5 907.1 L3304.0 909.1 L3306.8 911.8 L3309.6 911.7 L3313.4 906.4 L3315.8 902.7 L3318.2 902.7 L3321.4 905.5 L3324.6 914.7 L3327.4 921.9 L3330.2 924.0 L3334.0 931.5 L3336.8 924.5 L3339.6 918.4 L3342.4 921.3 L3345.2 920.3 L3348.0 921.0 L3350.8 922.9 L3353.3 922.8 L3355.8 917.7 L3358.3 915.4 L3360.6 912.0 L3362.9 909.7 L3365.3 911.8 L3367.6 910.2 L3371.4 913.9 L3374.2 913.1 L3377.0 913.2 L3379.8 906.2 L3382.6 907.2 L3385.1 908.6 L3387.6 907.6 L3390.1 909.1 L3392.9 909.7 L3395.7 910.2 L3399.4 901.6 L3401.8 898.4 L3404.1 898.3 L3406.4 898.9 L3408.8 897.8 L3411.3 900.9 L3413.8 896.1 L3416.3 899.0 L3418.7 895.4 L3421.2 893.9 L3423.7 888.5 L3426.0 887.4 L3428.2 880.3 L3430.7 879.1 L3433.1 881.8 L3435.9 877.1 L3438.7 877.3 L3442.4 886.6 L3444.9 886.1 L3447.4 882.9 L3449.9 876.5 L3453.7 888.5 L3456.5 890.6 L3459.3 893.0 L3462.1 883.8 L3464.9 880.3 L3468.6 881.0 L3471.8 892.2 L3475.0 897.8 L3477.4 892.8 L3479.9 889.2 L3482.7 887.3 L3485.5 880.3 L3488.3 882.3 L3491.1 882.9 L3493.9 878.4 L3496.7 869.8 L3500.4 872.8 L3503.2 864.4 L3506.0 860.4 L3509.8 852.9 L3512.2 852.3 L3514.6 848.1 L3516.9 854.4 L3519.1 864.2 L3521.8 873.5 L3525.5 856.7 L3527.7 857.0 L3530.0 860.7 L3532.2 859.3 L3536.0 873.5 L3537.8 886.6 L3540.3 885.0 L3542.7 879.1 L3546.4 867.9 L3550.2 852.9 L3553.5 860.4 L3553.5 1114.0 L626.4 1114.0 Z" fill="#4572a7" fill-opacity="0.2"/><path d="M626.3 1115.5 L628.9 1115.5 L631.5 1115.5 L634.1 1115.5 L636.7 1115.5 L639.3 1115.5 L641.9 1115.5 L644.5 1115.5 L647.1 1115.5 L649.7 1115.5 L652.2 1115.5 L654.8 1115.5 L657.4 1115.4 L660.0 1115.4 L662.6 1115.4 L665.2 1115.4 L667.8 1115.4 L670.4 1115.4 L673.0 1115.3 L675.6 1115.4 L678.2 1115.4 L680.8 1115.3 L683.4 1115.3 L686.0 1115.3 L688.6 1115.3 L691.2 1115.3 L693.7 1115.3 L696.3 1115.3 L698.9 1115.3 L701.5 1115.3 L704.1 1115.2 L706.7 1115.2 L709.3 1115.2 L711.9 1115.2 L714.5 1115.2 L717.1 1115.2 L719.7 1115.2 L722.3 1115.2 L724.9 1115.2 L727.5 1115.2 L730.1 1115.1 L732.7 1115.1 L735.3 1115.1 L737.8 1115.1 L740.4 1115.1 L743.0 1115.1 L745.6 1115.1 L748.2 1115.1 L750.8 1115.0 L753.4 1115.0 L756.0 1115.0 L758.6 1115.0 L761.2 1115.0 L763.8 1115.0 L766.4 1115.0 L769.0 1115.0 L771.6 1115.0 L774.2 1115.0 L776.8 1115.0 L779.4 1115.0 L782.0 1114.9 L784.6 1114.9 L787.2 1114.9 L789.8 1114.8 L792.4 1114.8 L795.0 1114.8 L797.5 1114.8 L800.1 1114.7 L802.7 1114.7 L805.3 1114.7 L807.9 1114.6 L810.5 1114.6 L813.1 1114.6 L815.7 1114.6 L818.3 1114.5 L820.9 1114.5 L823.5 1114.5 L826.1 1114.5 L828.7 1114.4 L831.3 1114.4 L833.9 1114.4 L836.5 1114.3 L839.1 1114.3 L841.7 1114.3 L844.3 1114.3 L846.9 1114.2 L849.5 1114.2 L852.1 1114.2 L854.7 1114.1 L857.3 1114.1 L859.9 1114.1 L862.5 1114.1 L865.1 1114.0 L867.7 1114.0 L870.3 1114.0 L872.9 1114.0 L875.5 1113.9 L878.1 1113.9 L880.7 1113.9 L883.3 1113.8 L885.9 1113.8 L888.5 1113.8 L891.1 1113.8 L893.7 1113.8 L896.3 1113.8 L898.9 1113.8 L901.5 1113.8 L904.1 1113.8 L906.7 1113.8 L909.3 1113.8 L911.9 1113.8 L914.5 1113.8 L917.1 1113.8 L919.7 1113.8 L922.3 1113.8 L924.9 1113.8 L927.5 1113.8 L930.1 1113.8 L932.7 1113.8 L935.3 1113.8 L937.9 1113.8 L940.5 1113.8 L943.1 1113.8 L945.7 1113.8 L948.3 1113.8 L950.9 1113.8 L953.5 1113.8 L956.1 1113.8 L958.7 1113.8 L961.3 1113.8 L963.9 1113.8 L966.5 1113.8 L969.1 1113.8 L971.7 1113.8 L974.3 1113.8 L976.9 1113.8 L979.5 1113.8 L982.1 1113.8 L984.7 1113.8 L987.3 1113.8 L989.9 1113.8 L992.5 1113.8 L995.1 1113.8 L997.7 1113.8 L1000.3 1113.8 L1002.9 1113.8 L1005.5 1113.8 L1008.1 1113.8 L1010.7 1113.8 L1013.3 1113.8 L1015.9 1113.8 L1018.5 1113.8 L1021.1 1113.7 L1023.7 1113.7 L1026.3 1113.7 L1028.9 1113.7 L1031.5 1113.7 L1034.1 1113.7 L1036.7 1113.7 L1039.3 1113.7 L1041.9 1113.7 L1044.5 1113.7 L1047.1 1113.7 L1049.7 1113.7 L1052.3 1113.6 L1054.9 1113.6 L1057.5 1113.6 L1060.1 1113.6 L1062.7 1113.6 L1065.3 1113.6 L1067.9 1113.6 L1070.5 1113.6 L1073.1 1113.6 L1075.7 1113.5 L1078.4 1113.5 L1081.0 1113.5 L1083.6 1113.5 L1086.2 1113.5 L1088.8 1113.5 L1091.4 1113.5 L1094.0 1113.5 L1096.6 1113.5 L1099.2 1113.5 L1101.8 1113.5 L1104.4 1113.4 L1107.0 1113.4 L1109.6 1113.4 L1112.2 1113.4 L1114.8 1113.4 L1117.4 1113.4 L1120.0 1113.4 L1122.6 1113.4 L1125.2 1113.4 L1127.8 1113.4 L1130.4 1113.4 L1133.0 1113.3 L1135.6 1113.3 L1138.2 1113.3 L1140.8 1113.3 L1143.4 1113.3 L1146.0 1113.3 L1148.6 1113.3 L1151.2 1113.3 L1153.8 1113.3 L1156.4 1113.3 L1159.0 1113.3 L1161.6 1113.3 L1164.2 1113.2 L1166.8 1113.2 L1169.5 1113.2 L1172.1 1113.2 L1174.7 1113.2 L1177.3 1113.2 L1179.9 1113.2 L1182.5 1113.2 L1185.1 1113.2 L1187.7 1113.2 L1190.3 1113.2 L1192.9 1113.2 L1195.4 1113.2 L1198.0 1113.1 L1200.6 1113.1 L1203.2 1113.1 L1205.8 1113.2 L1208.4 1113.2 L1211.0 1113.1 L1213.6 1113.2 L1216.2 1113.2 L1218.8 1113.2 L1221.4 1113.2 L1223.9 1113.2 L1226.5 1113.1 L1229.1 1113.1 L1231.7 1113.2 L1234.3 1113.2 L1236.9 1113.2 L1239.5 1113.2 L1242.1 1113.2 L1244.7 1113.2 L1247.3 1113.2 L1249.8 1113.1 L1252.4 1113.2 L1255.0 1113.2 L1257.6 1113.2 L1260.2 1113.1 L1262.8 1113.1 L1265.4 1113.0 L1268.0 1112.9 L1270.6 1112.9 L1273.2 1112.9 L1275.8 1112.8 L1278.4 1112.7 L1281.0 1112.7 L1283.6 1112.7 L1286.2 1112.6 L1288.8 1112.6 L1291.4 1112.5 L1294.0 1112.4 L1296.6 1112.4 L1299.2 1112.3 L1301.8 1112.3 L1304.4 1112.2 L1307.0 1112.1 L1309.6 1112.1 L1312.2 1112.0 L1314.8 1112.0 L1317.4 1112.0 L1320.0 1112.0 L1322.6 1112.0 L1325.2 1112.0 L1327.8 1112.0 L1330.4 1112.0 L1333.0 1112.0 L1335.6 1111.9 L1338.2 1112.0 L1340.8 1111.9 L1343.4 1111.9 L1346.0 1112.0 L1348.6 1112.0 L1351.2 1112.0 L1353.8 1112.0 L1356.4 1112.0 L1359.0 1112.0 L1361.6 1112.0 L1364.2 1112.0 L1366.8 1112.0 L1369.4 1112.0 L1372.0 1112.0 L1374.6 1112.0 L1377.2 1112.0 L1379.8 1112.0 L1382.4 1112.0 L1385.0 1112.0 L1387.6 1112.0 L1390.2 1112.0 L1392.8 1111.9 L1395.4 1112.0 L1398.0 1112.0 L1400.6 1112.0 L1403.2 1111.9 L1405.8 1111.9 L1408.4 1112.0 L1411.0 1111.9 L1413.6 1111.9 L1416.2 1111.9 L1418.8 1112.0 L1421.4 1112.0 L1424.0 1112.0 L1426.6 1111.9 L1429.2 1112.0 L1431.8 1112.0 L1434.4 1111.9 L1437.0 1112.0 L1439.6 1111.9 L1442.3 1111.7 L1444.9 1111.5 L1447.6 1111.5 L1450.3 1111.3 L1452.9 1111.2 L1455.6 1111.1 L1458.2 1110.9 L1460.9 1110.8 L1463.6 1110.6 L1466.3 1110.5 L1469.0 1110.3 L1471.6 1110.1 L1474.3 1110.0 L1477.0 1109.8 L1479.7 1109.8 L1482.4 1109.6 L1485.0 1109.5 L1487.5 1109.6 L1490.1 1109.6 L1492.6 1109.6 L1495.2 1109.7 L1497.7 1109.8 L1500.3 1109.8 L1502.8 1109.7 L1505.4 1109.9 L1507.9 1109.9 L1510.5 1109.9 L1513.1 1109.8 L1515.6 1109.9 L1518.2 1109.9 L1520.7 1110.0 L1523.3 1110.0 L1525.8 1110.0 L1528.4 1110.1 L1530.9 1110.1 L1533.5 1110.2 L1536.0 1110.1 L1538.6 1110.2 L1541.3 1109.9 L1543.9 1109.8 L1546.6 1109.6 L1549.2 1109.4 L1551.9 1109.1 L1554.5 1108.9 L1557.2 1108.8 L1559.9 1108.6 L1562.5 1108.4 L1565.1 1108.3 L1567.7 1108.5 L1570.3 1108.4 L1572.8 1108.4 L1575.4 1108.3 L1578.0 1108.4 L1580.6 1108.3 L1583.2 1108.4 L1585.7 1108.4 L1588.3 1108.3 L1590.9 1108.4 L1593.5 1108.5 L1596.1 1108.3 L1598.7 1108.3 L1601.2 1108.4 L1603.8 1108.3 L1606.4 1108.3 L1609.0 1108.3 L1611.6 1108.3 L1614.1 1108.3 L1616.7 1108.3 L1619.3 1108.3 L1621.9 1108.4 L1624.5 1108.3 L1627.1 1108.4 L1629.6 1108.3 L1632.2 1108.3 L1634.8 1108.3 L1637.4 1108.3 L1640.0 1108.3 L1642.5 1108.4 L1645.1 1108.4 L1647.7 1108.3 L1650.3 1108.4 L1652.9 1108.5 L1655.5 1108.3 L1658.0 1108.4 L1660.6 1108.4 L1663.2 1108.4 L1665.8 1108.4 L1668.4 1108.4 L1670.9 1108.4 L1673.5 1108.4 L1676.1 1108.4 L1678.7 1108.4 L1681.3 1108.3 L1684.0 1108.4 L1686.6 1108.3 L1689.2 1108.3 L1691.8 1108.3 L1694.4 1108.2 L1697.0 1108.2 L1699.7 1108.2 L1702.3 1108.1 L1704.9 1108.2 L1707.5 1108.1 L1710.1 1108.1 L1712.8 1108.1 L1715.4 1108.2 L1718.0 1108.2 L1720.6 1108.1 L1723.2 1108.0 L1725.8 1108.0 L1728.5 1108.0 L1731.1 1108.0 L1733.7 1108.0 L1736.3 1108.0 L1738.9 1107.9 L1741.5 1108.1 L1744.2 1108.0 L1746.8 1107.9 L1749.4 1107.9 L1752.0 1108.0 L1754.6 1107.9 L1757.2 1107.8 L1759.9 1107.8 L1762.5 1107.8 L1765.1 1107.8 L1767.7 1107.8 L1770.3 1107.7 L1773.0 1107.8 L1775.5 1107.7 L1778.1 1107.6 L1780.7 1107.6 L1783.3 1107.5 L1785.8 1107.5 L1788.4 1107.3 L1791.0 1107.3 L1793.6 1107.3 L1796.2 1107.2 L1798.7 1107.2 L1801.3 1107.2 L1803.9 1107.2 L1806.5 1107.1 L1809.0 1107.0 L1811.6 1107.0 L1814.2 1106.9 L1816.8 1106.8 L1819.4 1106.9 L1821.9 1106.6 L1824.5 1106.7 L1827.1 1106.6 L1829.7 1106.4 L1832.3 1106.6 L1834.8 1106.5 L1837.4 1106.4 L1840.0 1106.4 L1842.6 1106.3 L1845.1 1106.1 L1847.7 1106.2 L1850.3 1106.1 L1852.9 1106.1 L1855.5 1106.0 L1858.1 1106.0 L1860.8 1106.0 L1863.4 1105.9 L1866.1 1106.0 L1868.7 1105.9 L1871.4 1105.8 L1874.1 1105.7 L1876.7 1105.6 L1879.4 1105.6 L1882.0 1105.6 L1884.7 1105.5 L1887.3 1105.7 L1890.0 1105.6 L1892.7 1105.6 L1895.3 1105.5 L1898.0 1105.5 L1900.6 1105.4 L1903.3 1105.4 L1905.8 1105.2 L1908.4 1105.3 L1911.0 1105.2 L1913.5 1105.0 L1916.1 1105.0 L1918.7 1104.9 L1921.2 1104.7 L1923.8 1104.8 L1926.3 1104.5 L1928.9 1104.4 L1931.5 1104.4 L1934.0 1104.4 L1936.6 1104.2 L1939.2 1104.2 L1941.5 1103.8 L1943.9 1103.4 L1946.3 1102.8 L1948.7 1102.2 L1951.1 1101.8 L1953.7 1101.7 L1956.3 1101.6 L1959.0 1101.6 L1961.6 1101.4 L1964.2 1101.3 L1966.8 1101.0 L1969.4 1100.9 L1972.0 1100.8 L1974.6 1100.9 L1977.3 1100.6 L1979.9 1100.6 L1982.5 1100.2 L1985.1 1100.1 L1987.7 1100.1 L1990.3 1100.2 L1993.0 1100.0 L1995.5 1100.2 L1998.1 1100.3 L2000.6 1100.2 L2003.2 1100.4 L2005.8 1100.4 L2008.3 1100.5 L2010.9 1100.6 L2013.5 1100.4 L2016.0 1100.7 L2018.6 1100.3 L2021.1 1100.6 L2023.7 1100.5 L2026.3 1100.0 L2028.8 1100.2 L2031.4 1100.3 L2034.0 1100.3 L2036.5 1100.0 L2039.1 1099.9 L2041.6 1099.8 L2044.2 1100.1 L2046.8 1099.7 L2049.3 1099.8 L2051.9 1099.5 L2054.4 1099.6 L2057.0 1099.8 L2059.6 1099.4 L2062.1 1099.6 L2064.7 1099.4 L2067.1 1099.7 L2069.5 1100.1 L2071.9 1100.2 L2074.3 1100.2 L2076.7 1100.6 L2079.2 1100.9 L2081.8 1100.8 L2084.4 1100.7 L2087.0 1100.8 L2089.6 1101.1 L2092.2 1101.1 L2094.8 1101.2 L2097.4 1101.2 L2100.0 1101.4 L2102.6 1101.4 L2105.1 1101.5 L2107.7 1101.8 L2110.3 1101.5 L2112.8 1101.9 L2115.4 1102.0 L2118.0 1101.8 L2120.5 1102.2 L2123.1 1102.1 L2125.3 1101.1 L2127.5 1100.1 L2129.7 1098.8 L2132.2 1098.5 L2134.6 1098.4 L2137.1 1098.2 L2139.6 1098.1 L2142.2 1098.2 L2144.9 1097.8 L2147.5 1097.6 L2150.2 1097.4 L2152.8 1097.2 L2155.4 1096.9 L2158.1 1096.8 L2160.7 1097.0 L2163.4 1096.5 L2166.0 1096.5 L2168.6 1096.6 L2171.3 1096.1 L2173.9 1095.9 L2176.6 1096.0 L2179.2 1095.6 L2181.8 1095.6 L2184.5 1095.8 L2187.1 1095.7 L2189.8 1095.5 L2192.4 1095.2 L2195.0 1095.3 L2197.7 1095.2 L2200.3 1094.8 L2202.9 1094.8 L2205.6 1094.5 L2208.2 1094.2 L2210.9 1094.6 L2213.5 1094.3 L2216.1 1094.5 L2218.8 1094.4 L2221.4 1094.1 L2224.1 1093.9 L2226.7 1094.4 L2229.3 1093.9 L2232.0 1094.0 L2234.6 1093.9 L2237.3 1093.8 L2239.9 1094.1 L2242.5 1094.2 L2245.2 1093.8 L2247.7 1094.0 L2250.1 1094.5 L2252.6 1094.5 L2255.1 1095.0 L2257.6 1095.2 L2260.0 1095.5 L2262.6 1095.1 L2265.1 1094.8 L2267.6 1094.6 L2270.2 1094.9 L2272.7 1094.4 L2275.2 1094.0 L2277.7 1094.2 L2280.3 1094.1 L2282.8 1093.5 L2285.3 1093.1 L2287.9 1092.9 L2290.4 1092.6 L2292.9 1092.5 L2295.5 1092.1 L2298.0 1092.2 L2300.6 1092.4 L2303.3 1092.8 L2305.9 1093.4 L2308.5 1094.0 L2311.2 1094.2 L2313.9 1094.5 L2316.5 1094.4 L2319.2 1094.6 L2321.9 1094.8 L2324.6 1094.9 L2327.3 1095.1 L2329.9 1095.1 L2332.6 1095.5 L2335.2 1095.1 L2337.7 1095.2 L2340.3 1094.4 L2342.8 1094.4 L2345.4 1094.2 L2347.9 1094.1 L2350.5 1093.4 L2353.0 1093.2 L2355.6 1092.9 L2358.1 1092.7 L2360.7 1092.5 L2363.3 1092.1 L2366.0 1092.1 L2368.6 1091.7 L2371.2 1091.3 L2373.9 1090.3 L2376.5 1090.0 L2379.2 1090.1 L2381.8 1089.9 L2384.4 1089.2 L2387.1 1088.9 L2389.8 1089.1 L2392.5 1088.7 L2395.2 1089.2 L2397.9 1089.7 L2400.6 1089.7 L2403.3 1089.9 L2406.0 1090.1 L2408.7 1089.7 L2411.4 1089.7 L2414.1 1089.8 L2416.8 1090.2 L2419.4 1089.6 L2422.0 1089.0 L2424.5 1088.6 L2427.1 1087.8 L2429.7 1087.0 L2432.3 1086.5 L2434.9 1085.6 L2437.7 1086.4 L2440.4 1087.4 L2443.2 1088.2 L2445.4 1087.2 L2447.6 1087.2 L2449.8 1086.2 L2452.4 1086.1 L2455.0 1086.7 L2457.7 1086.5 L2460.3 1086.3 L2463.0 1086.1 L2465.6 1086.3 L2468.2 1086.7 L2470.9 1086.8 L2473.5 1086.3 L2476.2 1086.3 L2478.8 1086.8 L2481.4 1086.8 L2484.1 1086.7 L2486.7 1086.6 L2489.4 1086.9 L2492.0 1086.7 L2494.5 1085.8 L2497.1 1085.7 L2499.7 1085.6 L2502.3 1085.7 L2504.9 1085.1 L2507.5 1085.0 L2510.1 1084.2 L2512.7 1083.7 L2515.3 1083.4 L2517.9 1083.7 L2520.5 1083.2 L2523.1 1082.4 L2525.7 1082.3 L2528.4 1081.8 L2531.2 1082.3 L2533.9 1082.5 L2536.7 1082.2 L2539.4 1082.0 L2542.2 1082.3 L2544.8 1081.5 L2547.4 1080.8 L2550.1 1079.0 L2552.7 1077.8 L2555.4 1077.3 L2558.0 1076.5 L2560.6 1075.9 L2563.3 1075.6 L2565.9 1074.3 L2568.6 1074.0 L2571.3 1073.7 L2574.1 1072.9 L2576.8 1071.9 L2579.6 1070.8 L2582.3 1071.1 L2585.1 1069.8 L2587.7 1069.5 L2590.3 1070.2 L2593.0 1069.4 L2595.6 1069.4 L2598.3 1069.8 L2600.9 1069.7 L2603.5 1068.5 L2606.2 1069.0 L2608.8 1067.9 L2611.4 1067.4 L2614.2 1066.8 L2616.9 1066.7 L2619.7 1066.8 L2622.4 1067.0 L2625.2 1067.3 L2627.9 1066.5 L2630.6 1064.9 L2633.2 1064.3 L2635.9 1063.0 L2638.5 1063.3 L2641.1 1061.5 L2643.6 1060.8 L2646.1 1060.5 L2648.6 1060.4 L2651.0 1060.9 L2653.5 1061.6 L2656.0 1060.8 L2658.6 1062.2 L2661.3 1062.7 L2663.9 1063.8 L2666.6 1064.4 L2669.2 1064.5 L2672.1 1063.4 L2675.0 1062.3 L2677.9 1062.7 L2680.7 1061.2 L2683.4 1061.3 L2686.1 1059.8 L2688.8 1060.6 L2691.5 1059.9 L2694.2 1059.6 L2696.9 1059.3 L2699.6 1058.7 L2702.3 1058.1 L2705.0 1058.4 L2707.7 1058.2 L2710.4 1058.2 L2713.2 1059.2 L2715.9 1057.9 L2718.7 1059.5 L2721.4 1058.3 L2724.2 1058.8 L2726.9 1059.2 L2729.4 1059.8 L2731.9 1059.8 L2734.4 1059.1 L2736.8 1058.4 L2739.3 1059.1 L2741.8 1059.0 L2744.3 1059.9 L2746.7 1059.2 L2749.3 1058.9 L2751.9 1059.4 L2754.4 1060.5 L2757.0 1059.3 L2759.6 1060.1 L2762.1 1061.0 L2764.7 1061.2 L2767.3 1060.2 L2769.8 1061.2 L2772.3 1060.0 L2774.8 1059.6 L2777.3 1060.7 L2779.7 1059.1 L2782.2 1059.5 L2784.7 1059.4 L2787.2 1058.0 L2789.6 1057.9 L2792.2 1057.7 L2794.8 1059.1 L2797.3 1058.7 L2799.9 1058.3 L2802.5 1059.4 L2805.0 1058.9 L2807.6 1059.0 L2810.2 1058.8 L2812.7 1059.9 L2815.2 1059.0 L2817.7 1058.0 L2820.2 1056.1 L2822.6 1054.6 L2825.2 1054.9 L2827.8 1052.7 L2830.3 1052.6 L2832.9 1052.6 L2835.5 1053.1 L2838.0 1052.6 L2840.6 1051.0 L2843.2 1050.3 L2845.7 1050.3 L2848.3 1050.5 L2850.9 1051.1 L2853.4 1052.3 L2856.0 1051.3 L2858.6 1052.9 L2861.1 1053.2 L2863.7 1053.7 L2866.3 1054.0 L2868.8 1053.9 L2871.0 1052.4 L2873.2 1050.0 L2875.4 1048.6 L2878.0 1048.4 L2880.5 1048.5 L2883.0 1049.5 L2885.6 1048.2 L2888.1 1048.5 L2890.7 1049.8 L2893.2 1048.8 L2895.7 1048.5 L2898.3 1048.6 L2900.8 1049.8 L2903.3 1049.4 L2905.9 1050.8 L2908.4 1050.0 L2910.9 1049.4 L2913.4 1048.4 L2915.8 1045.5 L2918.3 1044.7 L2920.8 1043.3 L2923.3 1042.9 L2925.7 1043.4 L2928.2 1043.5 L2930.7 1042.5 L2933.2 1041.6 L2935.6 1041.6 L2938.1 1041.4 L2940.3 1040.1 L2942.5 1038.7 L2944.7 1036.8 L2947.3 1037.6 L2949.8 1038.0 L2952.4 1037.4 L2955.2 1036.9 L2958.0 1035.5 L2960.5 1035.4 L2963.0 1038.1 L2965.5 1038.1 L2969.2 1034.8 L2972.0 1034.5 L2974.8 1035.4 L2977.6 1035.2 L2980.4 1036.4 L2983.2 1035.3 L2986.0 1036.3 L2988.5 1035.6 L2991.0 1035.5 L2993.5 1035.2 L2996.0 1037.0 L2998.5 1036.1 L3001.0 1035.9 L3004.0 1019.4 L3006.8 1011.4 L3009.6 1004.5 L3011.9 1006.3 L3014.1 1008.9 L3017.8 1011.2 L3020.6 1008.6 L3023.5 1002.6 L3025.7 999.5 L3027.9 995.3 L3030.2 993.2 L3032.4 997.2 L3034.7 998.8 L3037.5 997.6 L3040.3 995.1 L3042.8 997.0 L3045.3 993.6 L3047.8 995.1 L3050.3 996.6 L3052.8 999.5 L3055.3 1000.0 L3057.6 1000.5 L3059.9 1000.0 L3062.3 996.0 L3064.6 997.0 L3067.4 996.0 L3070.2 995.2 L3073.0 995.2 L3075.8 996.2 L3078.2 998.2 L3080.5 996.9 L3082.8 998.4 L3085.2 997.0 L3088.0 1001.8 L3090.8 1007.5 L3093.6 1004.4 L3096.4 998.8 L3099.2 997.7 L3102.0 997.0 L3105.8 1000.0 L3108.2 997.8 L3110.7 998.5 L3113.2 996.2 L3116.0 999.2 L3118.8 998.8 L3121.7 998.7 L3124.5 1001.5 L3127.0 1001.3 L3129.4 1000.9 L3131.9 1000.0 L3134.4 996.4 L3136.9 994.5 L3139.4 992.5 L3141.9 990.7 L3144.4 990.6 L3146.9 991.4 L3149.7 990.7 L3152.5 992.3 L3155.3 992.8 L3158.1 992.5 L3160.9 988.9 L3163.7 987.6 L3166.4 985.7 L3169.0 987.1 L3171.6 988.6 L3174.2 986.7 L3176.8 988.0 L3179.3 984.6 L3181.8 981.5 L3184.3 980.1 L3188.1 961.4 L3190.9 962.0 L3193.7 959.6 L3196.5 959.4 L3199.3 958.8 L3202.1 952.3 L3204.9 950.2 L3208.6 940.9 L3212.4 941.6 L3215.2 933.7 L3218.0 930.4 L3220.8 935.4 L3223.6 941.6 L3226.4 940.6 L3229.2 939.0 L3232.0 931.4 L3234.8 922.2 L3237.6 914.9 L3240.4 912.8 L3242.7 906.0 L3244.9 903.5 L3247.3 912.2 L3249.8 918.4 L3252.6 922.5 L3255.4 927.8 L3259.1 920.3 L3261.6 919.8 L3264.1 920.9 L3266.6 922.9 L3269.4 924.6 L3272.2 919.5 L3275.0 920.0 L3277.8 918.4 L3280.3 916.5 L3282.8 915.9 L3285.3 915.4 L3288.1 918.3 L3290.9 916.5 L3293.7 916.0 L3296.5 909.1 L3299.0 908.2 L3301.5 907.1 L3304.0 909.1 L3306.8 911.8 L3309.6 911.7 L3313.4 906.4 L3315.8 902.7 L3318.2 902.7 L3321.4 905.5 L3324.6 914.7 L3327.4 921.9 L3330.2 924.0 L3334.0 931.5 L3336.8 924.5 L3339.6 918.4 L3342.4 921.3 L3345.2 920.3 L3348.0 921.0 L3350.8 922.9 L3353.3 922.8 L3355.8 917.7 L3358.3 915.4 L3360.6 912.0 L3362.9 909.7 L3365.3 911.8 L3367.6 910.2 L3371.4 913.9 L3374.2 913.1 L3377.0 913.2 L3379.8 906.2 L3382.6 907.2 L3385.1 908.6 L3387.6 907.6 L3390.1 909.1 L3392.9 909.7 L3395.7 910.2 L3399.4 901.6 L3401.8 898.4 L3404.1 898.3 L3406.4 898.9 L3408.8 897.8 L3411.3 900.9 L3413.8 896.1 L3416.3 899.0 L3418.7 895.4 L3421.2 893.9 L3423.7 888.5 L3426.0 887.4 L3428.2 880.3 L3430.7 879.1 L3433.1 881.8 L3435.9 877.1 L3438.7 877.3 L3442.4 886.6 L3444.9 886.1 L3447.4 882.9 L3449.9 876.5 L3453.7 888.5 L3456.5 890.6 L3459.3 893.0 L3462.1 883.8 L3464.9 880.3 L3468.6 881.0 L3471.8 892.2 L3475.0 897.8 L3477.4 892.8 L3479.9 889.2 L3482.7 887.3 L3485.5 880.3 L3488.3 882.3 L3491.1 882.9 L3493.9 878.4 L3496.7 869.8 L3500.4 872.8 L3503.2 864.4 L3506.0 860.4 L3509.8 852.9 L3512.2 852.3 L3514.6 848.1 L3516.9 854.4 L3519.1 864.2 L3521.8 873.5 L3525.5 856.7 L3527.7 857.0 L3530.0 860.7 L3532.2 859.3 L3536.0 873.5 L3537.8 886.6 L3540.3 885.0 L3542.7 879.1 L3546.4 867.9 L3550.2 852.9 L3553.5 860.4" fill="none" stroke="#4572a7" stroke-width="4.6" stroke-linejoin="round"/><path d="M626.4 1113.5 H3554.5" stroke="#2f3a4a" stroke-width="1.4"/><path d="M626.4 1116.4 H3554.5" stroke="#ad4542" stroke-width="4.5"/><circle cx="1325.0" cy="1119" r="10.9" fill="#00be00" stroke="#b07d8c" stroke-width="1.9"/><path d="M1325.0 1112.4 V1129.2" stroke="#b87a8c" stroke-width="1.7"/><circle cx="1352.0" cy="1119" r="10.9" fill="#00be00" stroke="#b07d8c" stroke-width="1.9"/><path d="M1352.0 1112.4 V1129.2" stroke="#b87a8c" stroke-width="1.7"/><path d="M626.4 1244.5 H3554.5M626.4 1516.0 H3554.5M626.4 1382.4 H3554.5M891.0 1244.5 V1516.0M1187.7 1244.5 V1516.0M1482.0 1244.5 V1516.0M1773.0 1244.5 V1516.0M2063.0 1244.5 V1516.0M2360.0 1244.5 V1516.0M2652.3 1244.5 V1516.0M2943.0 1244.5 V1516.0M3233.0 1244.5 V1516.0M3526.0 1244.5 V1516.0" stroke="#d8d8d8" stroke-width="2" fill="none"/><path d="M2722.0 1380.2 v-3.8M2822.5 1380.2 v-5.7M2870.7 1380.2 v-8.3M2875.2 1380.2 v-3.4M2911.3 1380.2 v-8.3M2940.1 1380.2 v-10.6M2951.5 1380.2 v-5.7M2962.5 1380.2 v-3.8M2999.2 1380.2 v-23.9M3003.4 1380.2 v-37.5M3010.2 1380.2 v-14.8M3017.1 1380.2 v-5.7M3021.6 1380.2 v-14.8M3028.5 1380.2 v-12.5M3035.3 1380.2 v-5.7M3043.6 1380.2 v-3.8M3055.4 1380.2 v-3.8M3082.3 1380.2 v-8.3M3086.1 1380.2 v-5.7M3093.7 1380.2 v-14.8M3105.1 1380.2 v-3.8M3111.5 1380.2 v-8.3M3129.7 1380.2 v-3.8M3134.3 1380.2 v-10.2M3141.1 1380.2 v-3.8M3147.9 1380.2 v-5.7M3158.5 1380.2 v-12.9M3170.3 1380.2 v-5.7M3177.1 1380.2 v-12.9M3181.3 1380.2 v-23.9M3188.1 1380.2 v-114.2M3194.6 1380.2 v-10.6M3199.1 1380.2 v-19.7M3206.0 1380.2 v-26.2M3212.8 1380.2 v-19.7M3217.3 1380.2 v-8.3M3224.2 1380.2 v-14.8M3231.0 1380.2 v-28.4M3235.2 1380.2 v-30.7M3242.4 1380.2 v-21.6M3248.8 1380.2 v-14.8M3253.4 1380.2 v-8.3M3260.2 1380.2 v-5.7M3271.6 1380.2 v-5.7M3282.9 1380.2 v-14.8M3293.9 1380.2 v-17.1M3311.8 1380.2 v-19.3M3318.6 1380.2 v-5.7M3323.2 1380.2 v-5.7M3329.6 1380.2 v-5.7M3334.5 1380.2 v-21.6M3341.0 1380.2 v-10.6M3352.4 1380.2 v-3.8M3356.9 1380.2 v-14.8M3368.3 1380.2 v-8.3M3372.5 1380.2 v-10.6M3379.3 1380.2 v-10.6M3390.7 1380.2 v-3.8M3397.5 1380.2 v-17.1M3404.3 1380.2 v-3.8M3408.5 1380.2 v-3.8M3415.3 1380.2 v-8.3M3422.1 1380.2 v-19.3M3426.7 1380.2 v-26.2M3433.5 1380.2 v-8.3M3444.5 1380.2 v-19.3M3451.0 1380.2 v-5.7M3455.9 1380.2 v-17.1M3462.3 1380.2 v-12.9M3469.2 1380.2 v-5.7M3473.7 1380.2 v-14.8M3480.2 1380.2 v-28.4M3482.8 1380.2 v-48.5M3491.5 1380.2 v-28.4M3498.4 1380.2 v-3.8M3502.9 1380.2 v-28.4M3509.8 1380.2 v-23.9M3521.1 1380.2 v-50.8M3525.7 1380.2 v-12.9M3539.0 1380.2 v-55.4M3545.8 1380.2 v-28.4M2126.4 1380.2 v-6.0M2315.0 1380.2 v-8.7M2544.3 1380.2 v-6.0M2562.4 1380.2 v-6.0M2598.4 1380.2 v-4.0M2609.4 1380.2 v-4.0M2627.8 1380.2 v-4.0M2650.5 1380.2 v-4.0M2430.2 1380.2 v-4.0M2417.5 1380.2 v-3.0M1261.4 1380.2 v-1.9M1329.0 1380.2 v-2.2M1375.6 1380.2 v-2.6M1444.4 1380.2 v-2.8M1472.8 1380.2 v-1.7M1503.7 1380.2 v-2.2M1518.0 1380.2 v-2.4M1587.0 1380.2 v-2.9M1637.1 1380.2 v-2.9M1655.1 1380.2 v-1.6M1702.6 1380.2 v-1.8M1739.0 1380.2 v-3.1M1765.2 1380.2 v-3.4M1776.1 1380.2 v-2.7M1780.8 1380.2 v-2.3M1798.2 1380.2 v-1.6M1821.0 1380.2 v-3.4M1844.0 1380.2 v-2.4M1888.7 1380.2 v-3.0M1897.4 1380.2 v-3.6M1911.8 1380.2 v-1.5M1956.0 1380.2 v-3.0M1971.0 1380.2 v-3.0M1993.0 1380.2 v-2.5M2007.8 1380.2 v-2.3M2017.4 1380.2 v-2.9M2026.8 1380.2 v-3.3M2040.7 1380.2 v-3.4M2048.9 1380.2 v-2.5M2065.0 1380.2 v-2.3M2093.0 1380.2 v-2.3M2115.4 1380.2 v-2.8M2129.5 1380.2 v-3.5M2149.7 1380.2 v-3.5M2157.9 1380.2 v-2.6M2168.4 1380.2 v-3.9M2174.7 1380.2 v-4.0M2236.3 1380.2 v-2.4M2243.5 1380.2 v-3.1M2313.9 1380.2 v-3.9M2330.4 1380.2 v-3.8M2369.3 1380.2 v-3.0M2378.2 1380.2 v-3.8M2382.2 1380.2 v-1.9M2387.7 1380.2 v-4.4M2401.4 1380.2 v-3.0M2409.0 1380.2 v-2.6M2426.2 1380.2 v-1.9M2441.0 1380.2 v-2.6M2471.4 1380.2 v-3.7M2485.9 1380.2 v-3.7M2490.6 1380.2 v-2.8M2523.8 1380.2 v-4.1M2558.7 1380.2 v-4.4M2564.2 1380.2 v-4.2M2590.6 1380.2 v-4.0M2620.7 1380.2 v-2.3M2635.9 1380.2 v-2.7M2642.9 1380.2 v-3.2M2653.7 1380.2 v-4.0M2667.3 1380.2 v-3.2M2687.4 1380.2 v-4.0M2692.6 1380.2 v-2.2M2700.1 1380.2 v-2.3M2724.0 1380.2 v-4.5M2734.8 1380.2 v-2.3M2740.0 1380.2 v-2.8M2746.8 1380.2 v-2.6M2759.5 1380.2 v-5.0M2811.1 1380.2 v-2.3M2836.9 1380.2 v-2.2M2844.4 1380.2 v-4.0M2871.7 1380.2 v-3.0M2884.0 1380.2 v-1.8M2897.3 1380.2 v-2.7M2916.5 1380.2 v-3.2M2968.5 1380.2 v-4.2M2981.1 1380.2 v-3.9M3015.5 1380.2 v-3.2M3034.7 1380.2 v-3.8M3046.0 1380.2 v-4.6M3057.6 1380.2 v-4.8M3064.0 1380.2 v-4.0M3084.5 1380.2 v-2.1M3108.3 1380.2 v-4.6M3126.4 1380.2 v-2.7M3151.7 1380.2 v-1.9M3171.4 1380.2 v-4.1M3191.0 1380.2 v-2.2M3283.9 1380.2 v-2.2M3294.2 1380.2 v-3.3M3305.7 1380.2 v-3.5M3341.8 1380.2 v-1.8M3420.1 1380.2 v-1.8M3427.1 1380.2 v-3.2M3450.6 1380.2 v-3.1M3463.2 1380.2 v-2.1M3493.1 1380.2 v-2.2M3506.0 1380.2 v-3.1M3512.9 1380.2 v-2.1M3522.0 1380.2 v-1.6M3528.1 1380.2 v-3.2M3533.7 1380.2 v-3.1M3551.8 1380.2 v-1.6" stroke="#89a54e" stroke-width="1.800" fill="none"/><path d="M2710.6 1380.2 v7.2M2722.0 1380.2 v7.2M2728.8 1380.2 v7.2M2733.4 1380.2 v7.2M2746.7 1380.2 v7.2M2762.6 1380.2 v7.2M2789.5 1380.2 v4.9M2800.5 1380.2 v7.2M2814.2 1380.2 v9.5M2851.7 1380.2 v7.2M2863.8 1380.2 v9.5M2882.1 1380.2 v7.2M2888.5 1380.2 v7.2M2899.9 1380.2 v7.2M2904.4 1380.2 v7.2M2933.6 1380.2 v4.9M2946.9 1380.2 v9.5M2958.3 1380.2 v9.5M3010.2 1380.2 v15.9M3017.1 1380.2 v13.7M3028.5 1380.2 v7.2M3035.3 1380.2 v11.4M3050.8 1380.2 v13.7M3075.5 1380.2 v9.5M3082.3 1380.2 v11.4M3086.5 1380.2 v29.6M3100.1 1380.2 v9.5M3104.7 1380.2 v7.2M3118.3 1380.2 v13.7M3122.9 1380.2 v11.4M3147.5 1380.2 v9.5M3154.4 1380.2 v7.2M3165.8 1380.2 v13.7M3177.1 1380.2 v13.7M3188.1 1380.2 v18.2M3194.6 1380.2 v9.5M3206.0 1380.2 v18.2M3219.2 1380.2 v22.8M3223.8 1380.2 v27.3M3242.4 1380.2 v9.5M3248.8 1380.2 v36.4M3253.4 1380.2 v36.4M3260.2 1380.2 v9.5M3264.7 1380.2 v7.2M3282.6 1380.2 v20.5M3289.4 1380.2 v9.5M3300.8 1380.2 v7.2M3307.2 1380.2 v13.7M3311.8 1380.2 v9.5M3318.6 1380.2 v13.7M3323.2 1380.2 v45.1M3329.6 1380.2 v11.4M3334.5 1380.2 v27.3M3341.0 1380.2 v11.4M3345.5 1380.2 v9.5M3352.4 1380.2 v9.5M3368.3 1380.2 v15.9M3374.7 1380.2 v7.2M3386.1 1380.2 v11.4M3392.9 1380.2 v9.5M3404.3 1380.2 v7.2M3415.3 1380.2 v9.5M3426.7 1380.2 v25.0M3433.5 1380.2 v7.2M3440.0 1380.2 v27.3M3451.3 1380.2 v42.9M3457.8 1380.2 v15.9M3462.3 1380.2 v4.9M3469.2 1380.2 v31.9M3473.7 1380.2 v25.0M3487.0 1380.2 v15.9M3498.4 1380.2 v15.9M3516.6 1380.2 v63.3M3523.4 1380.2 v13.7M3527.6 1380.2 v27.3M3534.4 1380.2 v67.9M3539.0 1380.2 v11.4M3545.8 1380.2 v18.2M3552.6 1380.2 v38.7M2443.2 1380.2 v9.0M2621.1 1380.2 v11.0M2591.1 1380.2 v9.0M2555.4 1380.2 v6.7M2305.6 1380.2 v6.0M2310.0 1380.2 v6.0M2602.8 1380.2 v6.0M2645.2 1380.2 v6.0M1284.1 1380.2 v1.6M1288.5 1380.2 v1.8M1299.6 1380.2 v2.1M1337.4 1380.2 v2.6M1356.9 1380.2 v2.4M1362.8 1380.2 v2.3M1393.3 1380.2 v2.7M1417.7 1380.2 v2.0M1482.7 1380.2 v2.2M1537.4 1380.2 v2.6M1565.7 1380.2 v3.2M1615.4 1380.2 v2.5M1679.7 1380.2 v1.7M1713.5 1380.2 v3.3M1718.5 1380.2 v1.6M1858.8 1380.2 v2.9M1874.4 1380.2 v3.7M1924.0 1380.2 v1.5M1939.9 1380.2 v1.6M1966.6 1380.2 v3.4M2031.3 1380.2 v3.5M2074.6 1380.2 v2.7M2107.8 1380.2 v2.8M2122.5 1380.2 v3.9M2143.7 1380.2 v2.5M2192.0 1380.2 v2.8M2210.1 1380.2 v2.2M2224.9 1380.2 v3.5M2251.5 1380.2 v1.6M2267.9 1380.2 v4.4M2284.0 1380.2 v3.3M2288.2 1380.2 v2.0M2296.1 1380.2 v3.2M2305.5 1380.2 v3.5M2324.0 1380.2 v2.6M2336.5 1380.2 v4.5M2350.5 1380.2 v1.5M2362.0 1380.2 v1.7M2420.1 1380.2 v2.7M2436.1 1380.2 v2.8M2451.3 1380.2 v2.8M2463.6 1380.2 v3.0M2479.5 1380.2 v3.1M2503.1 1380.2 v2.8M2515.6 1380.2 v2.4M2533.8 1380.2 v4.4M2543.8 1380.2 v3.6M2548.7 1380.2 v1.5M2553.9 1380.2 v1.7M2569.2 1380.2 v4.0M2580.1 1380.2 v3.7M2598.6 1380.2 v1.9M2608.4 1380.2 v1.7M2614.9 1380.2 v4.7M2629.2 1380.2 v3.0M2658.8 1380.2 v4.5M2675.5 1380.2 v2.1M2680.1 1380.2 v5.1M2711.9 1380.2 v2.8M2769.3 1380.2 v3.6M2782.6 1380.2 v4.0M2792.5 1380.2 v5.4M2801.5 1380.2 v5.8M2823.3 1380.2 v5.8M2858.0 1380.2 v2.6M2908.1 1380.2 v1.5M2923.6 1380.2 v5.8M2932.5 1380.2 v2.0M2940.2 1380.2 v2.0M2954.1 1380.2 v1.9M2992.6 1380.2 v2.7M3005.2 1380.2 v4.5M3024.0 1380.2 v4.6M3075.0 1380.2 v4.4M3090.2 1380.2 v4.9M3100.6 1380.2 v3.1M3113.7 1380.2 v2.6M3135.5 1380.2 v5.0M3144.0 1380.2 v2.0M3164.5 1380.2 v2.3M3184.5 1380.2 v4.2M3201.3 1380.2 v2.4M3208.8 1380.2 v1.6M3221.8 1380.2 v5.8M3230.6 1380.2 v4.1M3242.0 1380.2 v4.6M3250.0 1380.2 v3.7M3261.0 1380.2 v1.5M3273.7 1380.2 v3.7M3320.3 1380.2 v2.1M3333.2 1380.2 v1.7M3352.2 1380.2 v3.0M3365.9 1380.2 v2.1M3379.5 1380.2 v5.7M3391.6 1380.2 v3.0M3404.7 1380.2 v5.4M3414.1 1380.2 v3.7M3439.1 1380.2 v3.4M3477.2 1380.2 v3.2M3485.9 1380.2 v4.2M3542.7 1380.2 v1.7" stroke="#80699b" stroke-width="1.800" fill="none"/><path d="M626.4 1380.2 H3554.5" stroke="#000" stroke-width="2.600"/><path d="M3554.200 787.5 V1163.9 M3554.200 1244.5 V1516.0" stroke="#c3d2e8" stroke-width="2.800"/></svg>
<div id="t91" class="t" style="top:811.0px;font-size:25.5px;color:#606060;right:129.3px;">12000%</div>
<div id="t92" class="t" style="top:854.6px;font-size:25.5px;color:#606060;right:129.3px;">10000%</div>
<div id="t93" class="t" style="top:902.5px;font-size:25.5px;color:#606060;right:129.3px;">8000%</div>
<div id="t94" class="t" style="top:950.2px;font-size:25.5px;color:#606060;right:129.3px;">6000%</div>
<div id="t95" class="t" style="top:997.2px;font-size:25.5px;color:#606060;right:129.3px;">4000%</div>
<div id="t96" class="t" style="top:1042.8px;font-size:25.5px;color:#606060;right:129.3px;">2000%</div>
<div id="t97" class="t" style="top:1089.2px;font-size:25.5px;color:#606060;right:129.3px;">0%</div>
<div id="t98" class="t" style="top:1135.7px;font-size:25.5px;color:#606060;right:129.3px;">-2000%</div>
<div id="t99" class="t" style="top:1355.3px;font-size:27.0px;color:#606060;right:124.0px;">0M</div>
<div id="t100" class="t" style="top:1489.9px;font-size:27.0px;color:#606060;right:124.0px;">-50M</div>
<div class="t" style="left:3557.500px;top:964px;width:52px;height:26px;font-size:26px;color:#606060;transform:rotate(90deg);transform-origin:center center;">收益</div>
<div class="t" style="left:3533.500px;top:1367px;width:104px;height:26px;font-size:26px;color:#606060;transform:rotate(90deg);transform-origin:center center;">每日买卖</div>
<div style="left:3593px;top:992px;width:120px;height:80.4px;border-radius:40.2px;background:#fff;box-shadow:0 4px 28px rgba(0,0,0,0.10)"></div>
<div style="left:3593px;top:1082px;width:81.3px;height:81.3px;border-radius:50%;background:#fff;box-shadow:0 4px 28px rgba(0,0,0,0.10)"></div>
<div style="left:3562.7px;top:1356.7px;width:90.3px;height:90.5px;border-radius:8px;background:#fff;box-shadow:0 3px 16px rgba(0,0,0,0.08)"></div>
<svg style="left:0;top:0" width="3677" height="1526" viewBox="0 0 3677 1526"><path d="M3627.4 1016.6 Q3629.9 1029.9 3643.2 1032.4 Q3629.9 1034.9 3627.4 1048.2 Q3624.9 1034.9 3611.6 1032.4 Q3624.9 1029.9 3627.4 1016.6 Z M3646.9 1011.2 Q3648.1 1017.6 3654.5 1018.8 Q3648.1 1020.0 3646.9 1026.4 Q3645.7 1020.0 3639.3 1018.8 Q3645.7 1017.6 3646.9 1011.2 Z M3646.9 1038.2 Q3648.1 1044.6 3654.5 1045.8 Q3648.1 1047.0 3646.9 1053.4 Q3645.7 1047.0 3639.3 1045.8 Q3645.7 1044.6 3646.9 1038.2 Z" fill="#1f1f1f"/><g fill="none" stroke="#6e6e6e" stroke-width="3.2"><path d="M3612.3 1109.3 H3643 M3627.6 1103.6 V1109.3 M3637.6 1109.5 C3634 1120 3626 1129 3616.2 1134.8 M3619.3 1112 C3623 1120 3630 1126 3639.5 1130.5"/><path d="M3635 1141 L3644.2 1119.2 L3653.4 1141 M3638.6 1134 H3649.8"/></g><circle cx="3608.8" cy="1271" r="50.4" fill="#5590f8"/><path d="M3579 1290.5 V1270 A29.8 31.5 0 0 1 3638.6 1270 V1290.5" fill="none" stroke="#fff" stroke-width="3"/><path d="M3579.4 1269.5 A11.6 10.8 0 0 0 3579.400 1291 Z M3638.400 1269.500 A11.600 10.800 0 0 1 3638.400 1291 Z" fill="#fff"/><path d="M3608.9 1250.6 C3625 1250.6 3634.800 1260 3634.800 1272.300 C3634.800 1277.500 3633 1282 3629.500 1285.800 L3632.600 1288.600 L3626 1288.300 C3621.500 1292 3615.500 1294 3608.900 1294 C3593 1294 3583 1284.500 3583 1272.300 C3583 1260 3593 1250.600 3608.900 1250.600 Z" fill="#fffefc"/><circle cx="3597.100" cy="1272.300" r="3" fill="#707070"/><circle cx="3614.300" cy="1272.300" r="3" fill="#707070"/><path d="M3601.600 1280.200 Q3606.600 1285.800 3611.600 1280.200" fill="none" stroke="#555" stroke-width="1.300"/><g fill="#adb5c2"><circle cx="3589.800" cy="1386.300" r="4.500"/><circle cx="3589.800" cy="1402" r="4.500"/><circle cx="3589.800" cy="1417.600" r="4.500"/><rect x="3599.400" y="1384" width="31.200" height="4.600" rx="2.300"/><rect x="3599.400" y="1399.700" width="31.200" height="4.600" rx="2.300"/><rect x="3599.400" y="1415.300" width="31.200" height="4.600" rx="2.300"/></g><g fill="#fff"><rect x="2791.3" y="92.2" width="4.1" height="8.1"/><rect x="2800.5" y="88.4" width="4.1" height="11.9"/><rect x="2809.6" y="89.6" width="4.3" height="10.7"/><rect x="2818.3" y="83.2" width="4.5" height="17.1"/><path d="M2813.6 70.3 L2822.9 69.3 L2822 78.5 Z"/></g><path d="M2791.7 87.9 L2803.8 76.8 L2810.2 81.7 L2819.5 72.6" fill="none" stroke="#fff" stroke-width="3.2"/><path d="M3032.6 70.4 A14.4 14.4 0 1 0 3047 84.9 H3032.6 Z" fill="none" stroke="#fff" stroke-width="2.3"/><path d="M3037.3 82 V67.3 A14.8 14.8 0 0 1 3052.1 82 Z" fill="#fff"/><path d="M3256.7 73.6 H3277.1 a3.4 3.4 0 0 1 3.4 3.4 V92.7 a3.4 3.4 0 0 1 -3.4 3.4 H3267.4 L3261 102.4 L3259.6 96.1 H3256.7 a3.4 3.4 0 0 1 -3.4 -3.4 V77 a3.4 3.4 0 0 1 3.4 -3.4 Z" fill="#021830"/><path d="M3259.1 69.9 H3281.5 a2.8 2.8 0 0 1 2.8 2.8 V88.800" fill="none" stroke="#021830" stroke-width="1.700"/><g fill="#fff"><rect x="3257.9" y="83" width="4" height="4.1"/><rect x="3264.7" y="83" width="4" height="4.1"/><rect x="3271.5" y="83" width="4" height="4.1"/></g></svg>
</body></html>
